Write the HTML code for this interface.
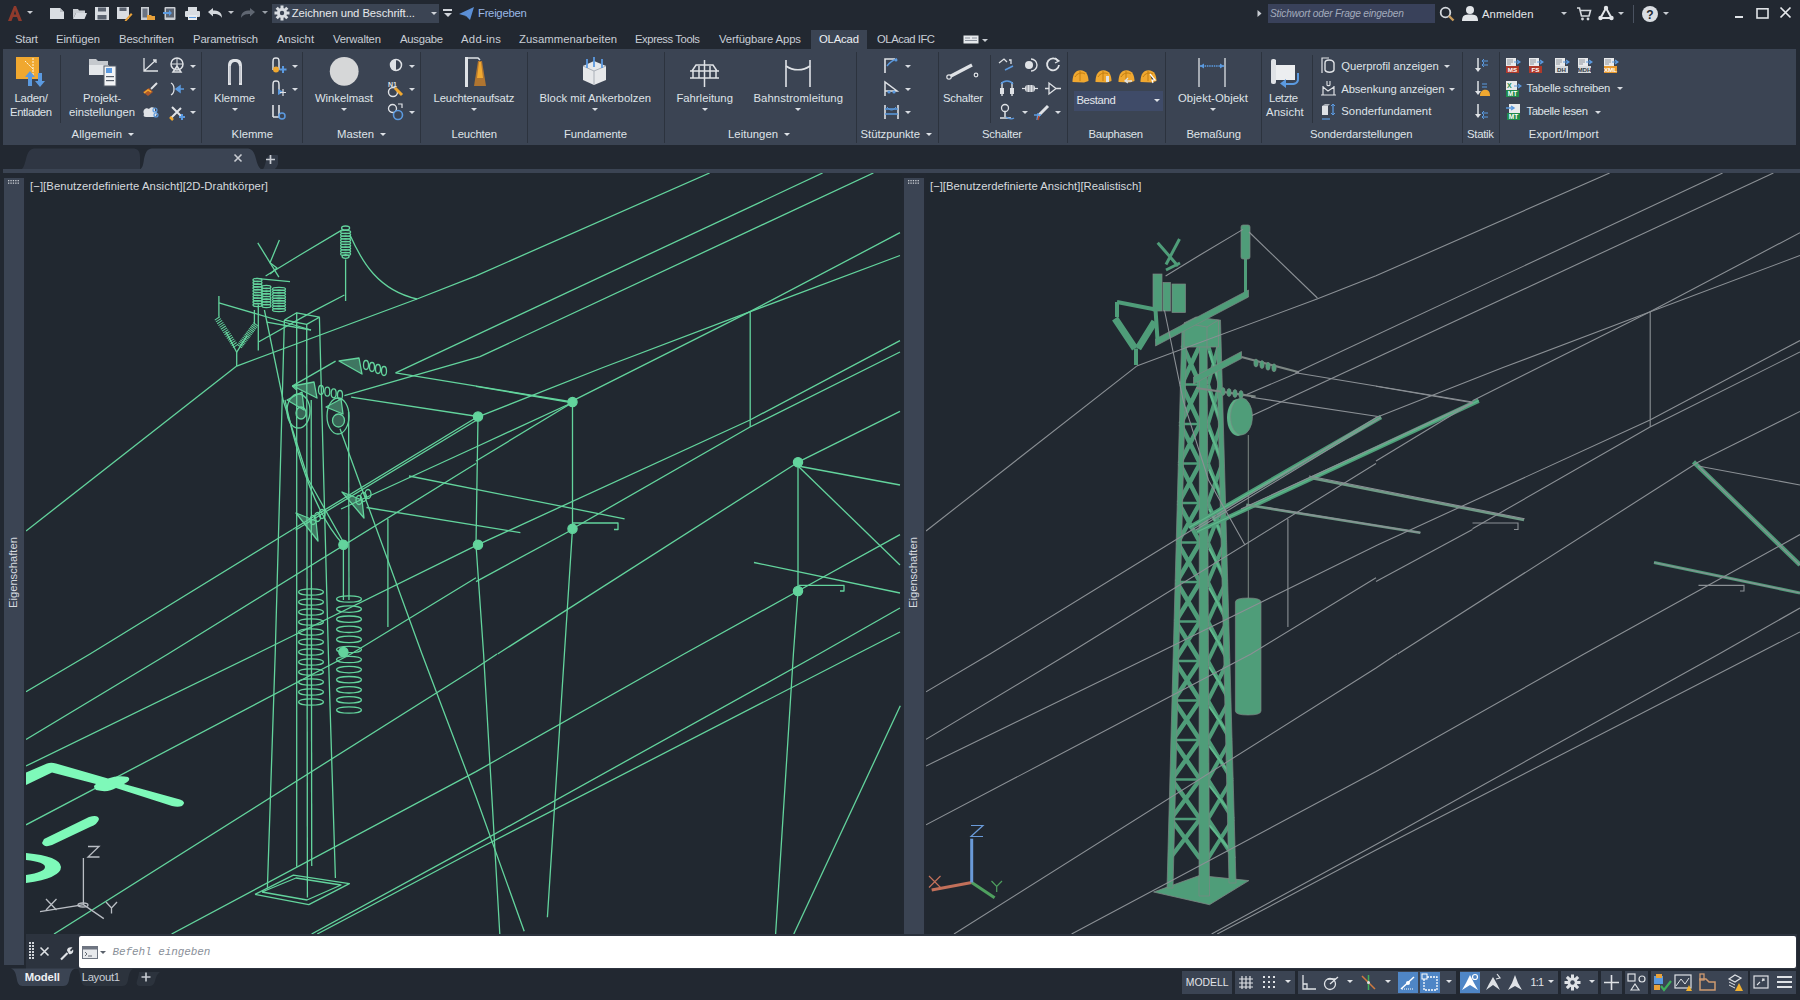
<!DOCTYPE html>
<html><head><meta charset="utf-8">
<style>
*{box-sizing:border-box}
html,body{margin:0;padding:0}
body{width:1800px;height:1000px;position:relative;overflow:hidden;background:#222831;font-family:"Liberation Sans",sans-serif;color:#e3e6ea;font-size:12px}
.a{position:absolute;display:block}
.t{position:absolute;white-space:nowrap}
</style></head><body>
<svg class="a" style="left:7px;top:5px;" width="16" height="17" viewBox="0 0 16 17"><path d="M1 16 L7 1 L9 1 L15 16 L11.5 16 L10 12 L6 12 L4.5 16 Z M6.8 9.5 L9.2 9.5 L8 5.5 Z" fill="#8f3a2c"/></svg>
<div class="a" style="left:26.5px;top:11.0px;width:0;height:0;border-left:3.0px solid transparent;border-right:3.0px solid transparent;border-top:3.0px solid #c8ccd2"></div>
<svg class="a" style="left:49px;top:7px;" width="17" height="13" viewBox="0 0 17 13"><path d="M1 1 H11 L15 5 V12 H1 Z" fill="#d9dde2"/><path d="M11 1 V5 H15" fill="#b8bcc2"/></svg>
<svg class="a" style="left:72px;top:7px;" width="16" height="13" viewBox="0 0 16 13"><path d="M1 2 H6 L7 3.5 H13 V6 H4 L1 12 Z" fill="#c9cdd2"/><path d="M4 6 H15 L12.5 12 H1 Z" fill="#d9dde2"/></svg>
<svg class="a" style="left:94px;top:6px;" width="16" height="15" viewBox="0 0 16 15"><rect x="1" y="1" width="14" height="13" fill="#d9dde2"/><rect x="4" y="1.5" width="8" height="4" fill="#5b6370"/><rect x="3.5" y="9" width="9" height="4.5" fill="#5b6370"/></svg>
<svg class="a" style="left:116px;top:6px;" width="17" height="15" viewBox="0 0 17 15"><rect x="1" y="1" width="12" height="12" fill="#d9dde2"/><rect x="3.5" y="1.5" width="7" height="3.5" fill="#5b6370"/><path d="M9 14 L15 7 L16.5 8.5 L10.5 15 L8.5 15.5 Z" fill="#e8a13a"/></svg>
<svg class="a" style="left:140px;top:6px;" width="16" height="15" viewBox="0 0 16 15"><rect x="1" y="1" width="8" height="13" fill="#c9cdd2"/><rect x="2.5" y="2.5" width="5" height="9" fill="#6a7280"/><path d="M7 9 H11 L12 10 H15 V14 H7 Z" fill="#e8a13a"/></svg>
<svg class="a" style="left:163px;top:6px;" width="14" height="15" viewBox="0 0 14 15"><rect x="1.5" y="1" width="11" height="13" rx="1" fill="#c9cdd2"/><rect x="3" y="2.5" width="8" height="9" fill="#5b6370"/><path d="M0 6 H6 V4 L9 7 L6 10 V8 H0 Z" fill="#5b9ae0"/></svg>
<svg class="a" style="left:184px;top:6px;" width="17" height="15" viewBox="0 0 17 15"><rect x="4" y="1" width="9" height="4" fill="#d9dde2"/><rect x="1" y="5" width="15" height="6" rx="1" fill="#d9dde2"/><rect x="4" y="9" width="9" height="5" fill="#e8ebee"/><rect x="5" y="11" width="7" height="1" fill="#5b9ae0"/></svg>
<svg class="a" style="left:207px;top:7px;" width="16" height="12" viewBox="0 0 16 12"><path d="M1 5 L6 1 V3.5 C11 3.5 15 5 15 11 C13 7.5 10 7 6 7 V9.5 Z" fill="#d4d8dd"/></svg>
<div class="a" style="left:228.0px;top:11.0px;width:0;height:0;border-left:3.0px solid transparent;border-right:3.0px solid transparent;border-top:3.0px solid #c0c4ca"></div>
<svg class="a" style="left:240px;top:7px;" width="16" height="12" viewBox="0 0 16 12"><path d="M15 5 L10 1 V3.5 C5 3.5 1 5 1 11 C3 7.5 6 7 10 7 V9.5 Z" fill="#5f6671"/></svg>
<div class="a" style="left:262.0px;top:11.0px;width:0;height:0;border-left:3.0px solid transparent;border-right:3.0px solid transparent;border-top:3.0px solid #9aa0a8"></div>
<div class="a" style="left:272px;top:4px;width:167px;height:19px;background:#3b4453;"></div>
<svg class="a" style="left:274px;top:5px;" width="16" height="16" viewBox="0 0 16 16"><g fill="#d9dde2"><circle cx="8" cy="8" r="5"/><rect x="6.5" y="0.5" width="3" height="15"/><rect x="0.5" y="6.5" width="15" height="3"/><rect x="6.5" y="0.5" width="3" height="15" transform="rotate(45 8 8)"/><rect x="6.5" y="0.5" width="3" height="15" transform="rotate(-45 8 8)"/></g><circle cx="8" cy="8" r="2.2" fill="#3b4453"/></svg>
<span class="t" style="left:291.7px;top:7.73px;font-size:11.30px;line-height:11.30px;color:#e6e8eb;font-family:'Liberation Sans',sans-serif;letter-spacing:-0.070px;">Zeichnen und Beschrift...</span>
<div class="a" style="left:431.0px;top:11.8px;width:0;height:0;border-left:3.5px solid transparent;border-right:3.5px solid transparent;border-top:3.5px solid #d0d4da"></div>
<div class="a" style="left:443px;top:9px;width:9px;height:1.5px;background:#d0d4da;"></div>
<div class="a" style="left:443.5px;top:12.5px;width:0;height:0;border-left:4.0px solid transparent;border-right:4.0px solid transparent;border-top:4.0px solid #d0d4da"></div>
<svg class="a" style="left:458px;top:6px;" width="17" height="15" viewBox="0 0 17 15"><path d="M1 8 L16 1 L12 14 L8 10 Z" fill="#5b8fd6"/><path d="M8 10 L16 1 L6 12 Z" fill="#8ab0e6"/></svg>
<span class="t" style="left:478.0px;top:8.43px;font-size:11.30px;line-height:11.30px;color:#9ab8e6;font-family:'Liberation Sans',sans-serif;letter-spacing:-0.272px;">Freigeben</span>
<svg class="a" style="left:1256px;top:9px;" width="7" height="9" viewBox="0 0 7 9"><path d="M1.5 1 L5.5 4.5 L1.5 8 Z" fill="#c8ccd2"/></svg>
<div class="a" style="left:1268px;top:4px;width:167px;height:19px;background:#39415a;"></div>
<span class="t" style="left:1270.0px;top:8.87px;font-size:10.20px;line-height:10.20px;color:#a3abbc;font-family:'Liberation Sans',sans-serif;letter-spacing:-0.195px;font-style:italic;">Stichwort oder Frage eingeben</span>
<svg class="a" style="left:1439px;top:6px;" width="16" height="16" viewBox="0 0 16 16"><circle cx="6.5" cy="6.5" r="4.8" fill="none" stroke="#d3d7dc" stroke-width="1.8"/><path d="M10 10 L14.5 14.5" stroke="#c79a5a" stroke-width="2.4"/></svg>
<svg class="a" style="left:1461px;top:5px;" width="18" height="17" viewBox="0 0 18 17"><circle cx="9" cy="5" r="4" fill="#e2e5e9"/><path d="M1 16 C1 10 4 9.5 9 9.5 C14 9.5 17 10 17 16 Z" fill="#e2e5e9"/></svg>
<span class="t" style="left:1482.0px;top:8.73px;font-size:11.30px;line-height:11.30px;color:#e4e7ea;font-family:'Liberation Sans',sans-serif;letter-spacing:0.089px;">Anmelden</span>
<div class="a" style="left:1561.0px;top:12.0px;width:0;height:0;border-left:3.0px solid transparent;border-right:3.0px solid transparent;border-top:3.0px solid #c8ccd2"></div>
<svg class="a" style="left:1576px;top:6px;" width="16" height="15" viewBox="0 0 16 15"><path d="M1 2 H3.5 L5.5 10 H13 L14.5 4.5 H4.5" fill="none" stroke="#d3d7dc" stroke-width="1.6"/><circle cx="6.5" cy="13" r="1.4" fill="#d3d7dc"/><circle cx="12" cy="13" r="1.4" fill="#d3d7dc"/></svg>
<svg class="a" style="left:1598px;top:5px;" width="16" height="16" viewBox="0 0 16 16"><path d="M8 3 L2.5 13 M8 3 L13.5 13 M2.5 13 H13.5" stroke="#e2e5e9" stroke-width="2"/><circle cx="8" cy="3" r="2.2" fill="#e2e5e9"/><circle cx="2.5" cy="13" r="2.2" fill="#e2e5e9"/><circle cx="13.5" cy="13" r="2.2" fill="#e2e5e9"/></svg>
<div class="a" style="left:1618.0px;top:12.0px;width:0;height:0;border-left:3.0px solid transparent;border-right:3.0px solid transparent;border-top:3.0px solid #c8ccd2"></div>
<div class="a" style="left:1633px;top:5px;width:1px;height:18px;background:#4a5260;"></div>
<svg class="a" style="left:1641px;top:5px;" width="18" height="18" viewBox="0 0 18 18"><circle cx="9" cy="9" r="8" fill="#d9dde2"/><text x="9" y="13.5" font-size="12" font-weight="bold" text-anchor="middle" fill="#222831" font-family="Liberation Sans">?</text></svg>
<div class="a" style="left:1663.0px;top:12.0px;width:0;height:0;border-left:3.0px solid transparent;border-right:3.0px solid transparent;border-top:3.0px solid #c8ccd2"></div>
<div class="a" style="left:1735px;top:16px;width:8px;height:2px;background:#e0e3e7;"></div>
<svg class="a" style="left:1756px;top:7px;" width="13" height="12" viewBox="0 0 13 12"><rect x="1" y="1.8" width="11" height="9.2" fill="none" stroke="#e0e3e7" stroke-width="1.6"/></svg>
<svg class="a" style="left:1779px;top:6px;" width="13" height="13" viewBox="0 0 13 13"><path d="M1.5 1.5 L11.5 11.5 M11.5 1.5 L1.5 11.5" stroke="#e6e9ec" stroke-width="1.7"/></svg>
<div class="a" style="left:811px;top:30px;width:56px;height:19px;background:#3b4453;"></div>
<span class="t" style="left:15.0px;top:33.73px;font-size:11.30px;line-height:11.30px;color:#c9ced6;font-family:'Liberation Sans',sans-serif;letter-spacing:-0.216px;">Start</span>
<span class="t" style="left:56.0px;top:33.73px;font-size:11.30px;line-height:11.30px;color:#c9ced6;font-family:'Liberation Sans',sans-serif;letter-spacing:-0.087px;">Einfügen</span>
<span class="t" style="left:119.0px;top:33.73px;font-size:11.30px;line-height:11.30px;color:#c9ced6;font-family:'Liberation Sans',sans-serif;letter-spacing:-0.152px;">Beschriften</span>
<span class="t" style="left:193.0px;top:33.73px;font-size:11.30px;line-height:11.30px;color:#c9ced6;font-family:'Liberation Sans',sans-serif;letter-spacing:-0.142px;">Parametrisch</span>
<span class="t" style="left:277.0px;top:33.73px;font-size:11.30px;line-height:11.30px;color:#c9ced6;font-family:'Liberation Sans',sans-serif;">Ansicht</span>
<span class="t" style="left:333.0px;top:33.73px;font-size:11.30px;line-height:11.30px;color:#c9ced6;font-family:'Liberation Sans',sans-serif;letter-spacing:-0.203px;">Verwalten</span>
<span class="t" style="left:400.0px;top:33.73px;font-size:11.30px;line-height:11.30px;color:#c9ced6;font-family:'Liberation Sans',sans-serif;letter-spacing:-0.268px;">Ausgabe</span>
<span class="t" style="left:461.0px;top:33.73px;font-size:11.30px;line-height:11.30px;color:#c9ced6;font-family:'Liberation Sans',sans-serif;letter-spacing:0.281px;">Add-ins</span>
<span class="t" style="left:519.0px;top:33.73px;font-size:11.30px;line-height:11.30px;color:#c9ced6;font-family:'Liberation Sans',sans-serif;letter-spacing:0.044px;">Zusammenarbeiten</span>
<span class="t" style="left:635.0px;top:33.73px;font-size:11.30px;line-height:11.30px;color:#c9ced6;font-family:'Liberation Sans',sans-serif;letter-spacing:-0.428px;">Express Tools</span>
<span class="t" style="left:719.0px;top:33.73px;font-size:11.30px;line-height:11.30px;color:#c9ced6;font-family:'Liberation Sans',sans-serif;letter-spacing:-0.111px;">Verfügbare Apps</span>
<span class="t" style="left:819.0px;top:33.73px;font-size:11.30px;line-height:11.30px;color:#eef0f3;font-family:'Liberation Sans',sans-serif;letter-spacing:-0.166px;">OLAcad</span>
<span class="t" style="left:877.0px;top:33.73px;font-size:11.30px;line-height:11.30px;color:#c9ced6;font-family:'Liberation Sans',sans-serif;letter-spacing:-0.463px;">OLAcad IFC</span>
<svg class="a" style="left:963px;top:35px;" width="16" height="9" viewBox="0 0 16 9"><rect x="0.5" y="0.5" width="15" height="8" fill="#e6e9ec"/><rect x="2" y="2.5" width="5" height="1" fill="#8a919c"/><rect x="9" y="2.5" width="5" height="1" fill="#8a919c"/><rect x="2" y="5" width="12" height="1" fill="#8a919c"/></svg>
<div class="a" style="left:982.0px;top:38.5px;width:0;height:0;border-left:3.0px solid transparent;border-right:3.0px solid transparent;border-top:3.0px solid #c8ccd2"></div>
<div class="a" style="left:3px;top:49px;width:1793px;height:96px;background:#3b4453;"></div>
<div class="a" style="left:201px;top:52px;width:1px;height:91px;background:#2c333e;"></div>
<div class="a" style="left:302px;top:52px;width:1px;height:91px;background:#2c333e;"></div>
<div class="a" style="left:420px;top:52px;width:1px;height:91px;background:#2c333e;"></div>
<div class="a" style="left:527px;top:52px;width:1px;height:91px;background:#2c333e;"></div>
<div class="a" style="left:663.5px;top:52px;width:1px;height:91px;background:#2c333e;"></div>
<div class="a" style="left:855.5px;top:52px;width:1px;height:91px;background:#2c333e;"></div>
<div class="a" style="left:938px;top:52px;width:1px;height:91px;background:#2c333e;"></div>
<div class="a" style="left:1066.5px;top:52px;width:1px;height:91px;background:#2c333e;"></div>
<div class="a" style="left:1165px;top:52px;width:1px;height:91px;background:#2c333e;"></div>
<div class="a" style="left:1260.5px;top:52px;width:1px;height:91px;background:#2c333e;"></div>
<div class="a" style="left:1461.5px;top:52px;width:1px;height:91px;background:#2c333e;"></div>
<div class="a" style="left:1498.5px;top:52px;width:1px;height:91px;background:#2c333e;"></div>
<div class="a" style="left:60px;top:55px;width:1px;height:68px;background:#2c333e;"></div>
<div class="a" style="left:990px;top:55px;width:1px;height:68px;background:#2c333e;"></div>
<div class="a" style="left:1311.5px;top:55px;width:1px;height:68px;background:#2c333e;"></div>
<span class="t" style="left:71.5px;top:129.23px;font-size:11.30px;line-height:11.30px;color:#dfe3e8;font-family:'Liberation Sans',sans-serif;letter-spacing:0.110px;">Allgemein</span>
<div class="a" style="left:127.5px;top:133.1px;width:0;height:0;border-left:3.5px solid transparent;border-right:3.5px solid transparent;border-top:3.5px solid #dfe3e8"></div>
<span class="t" style="left:231.6px;top:129.23px;font-size:11.30px;line-height:11.30px;color:#dfe3e8;font-family:'Liberation Sans',sans-serif;">Klemme</span>
<span class="t" style="left:337.0px;top:129.23px;font-size:11.30px;line-height:11.30px;color:#dfe3e8;font-family:'Liberation Sans',sans-serif;letter-spacing:-0.011px;">Masten</span>
<div class="a" style="left:379.5px;top:133.1px;width:0;height:0;border-left:3.5px solid transparent;border-right:3.5px solid transparent;border-top:3.5px solid #dfe3e8"></div>
<span class="t" style="left:451.5px;top:129.23px;font-size:11.30px;line-height:11.30px;color:#dfe3e8;font-family:'Liberation Sans',sans-serif;letter-spacing:-0.142px;">Leuchten</span>
<span class="t" style="left:564.0px;top:129.23px;font-size:11.30px;line-height:11.30px;color:#dfe3e8;font-family:'Liberation Sans',sans-serif;letter-spacing:-0.049px;">Fundamente</span>
<span class="t" style="left:728.0px;top:129.23px;font-size:11.30px;line-height:11.30px;color:#dfe3e8;font-family:'Liberation Sans',sans-serif;letter-spacing:0.045px;">Leitungen</span>
<div class="a" style="left:783.5px;top:133.1px;width:0;height:0;border-left:3.5px solid transparent;border-right:3.5px solid transparent;border-top:3.5px solid #dfe3e8"></div>
<span class="t" style="left:860.5px;top:129.23px;font-size:11.30px;line-height:11.30px;color:#dfe3e8;font-family:'Liberation Sans',sans-serif;letter-spacing:-0.017px;">Stützpunkte</span>
<div class="a" style="left:925.5px;top:133.1px;width:0;height:0;border-left:3.5px solid transparent;border-right:3.5px solid transparent;border-top:3.5px solid #dfe3e8"></div>
<span class="t" style="left:982.0px;top:129.23px;font-size:11.30px;line-height:11.30px;color:#dfe3e8;font-family:'Liberation Sans',sans-serif;letter-spacing:-0.207px;">Schalter</span>
<span class="t" style="left:1088.5px;top:129.23px;font-size:11.30px;line-height:11.30px;color:#dfe3e8;font-family:'Liberation Sans',sans-serif;letter-spacing:-0.334px;">Bauphasen</span>
<span class="t" style="left:1186.4px;top:129.23px;font-size:11.30px;line-height:11.30px;color:#dfe3e8;font-family:'Liberation Sans',sans-serif;letter-spacing:-0.096px;">Bemaßung</span>
<span class="t" style="left:1310.0px;top:129.23px;font-size:11.30px;line-height:11.30px;color:#dfe3e8;font-family:'Liberation Sans',sans-serif;letter-spacing:-0.093px;">Sonderdarstellungen</span>
<span class="t" style="left:1467.0px;top:129.23px;font-size:11.30px;line-height:11.30px;color:#dfe3e8;font-family:'Liberation Sans',sans-serif;letter-spacing:-0.252px;">Statik</span>
<span class="t" style="left:1528.7px;top:129.23px;font-size:11.30px;line-height:11.30px;color:#dfe3e8;font-family:'Liberation Sans',sans-serif;letter-spacing:0.182px;">Export/Import</span>
<span class="t" style="left:14.5px;top:92.63px;font-size:11.30px;line-height:11.30px;color:#dfe3e8;font-family:'Liberation Sans',sans-serif;letter-spacing:-0.212px;">Laden/</span>
<span class="t" style="left:10.0px;top:106.93px;font-size:11.30px;line-height:11.30px;color:#dfe3e8;font-family:'Liberation Sans',sans-serif;letter-spacing:-0.372px;">Entladen</span>
<span class="t" style="left:83.0px;top:92.63px;font-size:11.30px;line-height:11.30px;color:#dfe3e8;font-family:'Liberation Sans',sans-serif;letter-spacing:-0.133px;">Projekt-</span>
<span class="t" style="left:69.0px;top:106.93px;font-size:11.30px;line-height:11.30px;color:#dfe3e8;font-family:'Liberation Sans',sans-serif;letter-spacing:-0.049px;">einstellungen</span>
<span class="t" style="left:214.0px;top:92.63px;font-size:11.30px;line-height:11.30px;color:#dfe3e8;font-family:'Liberation Sans',sans-serif;letter-spacing:-0.088px;">Klemme</span>
<div class="a" style="left:232.0px;top:108.3px;width:0;height:0;border-left:3.0px solid transparent;border-right:3.0px solid transparent;border-top:3.0px solid #d8dce2"></div>
<span class="t" style="left:315.0px;top:92.63px;font-size:11.30px;line-height:11.30px;color:#dfe3e8;font-family:'Liberation Sans',sans-serif;letter-spacing:-0.043px;">Winkelmast</span>
<div class="a" style="left:340.6px;top:108.3px;width:0;height:0;border-left:3.0px solid transparent;border-right:3.0px solid transparent;border-top:3.0px solid #d8dce2"></div>
<span class="t" style="left:433.6px;top:92.63px;font-size:11.30px;line-height:11.30px;color:#dfe3e8;font-family:'Liberation Sans',sans-serif;letter-spacing:-0.152px;">Leuchtenaufsatz</span>
<div class="a" style="left:470.5px;top:108.3px;width:0;height:0;border-left:3.0px solid transparent;border-right:3.0px solid transparent;border-top:3.0px solid #d8dce2"></div>
<span class="t" style="left:539.5px;top:92.63px;font-size:11.30px;line-height:11.30px;color:#dfe3e8;font-family:'Liberation Sans',sans-serif;letter-spacing:0.017px;">Block mit Ankerbolzen</span>
<div class="a" style="left:592.0px;top:108.3px;width:0;height:0;border-left:3.0px solid transparent;border-right:3.0px solid transparent;border-top:3.0px solid #d8dce2"></div>
<span class="t" style="left:676.4px;top:92.63px;font-size:11.30px;line-height:11.30px;color:#dfe3e8;font-family:'Liberation Sans',sans-serif;">Fahrleitung</span>
<div class="a" style="left:702.0px;top:108.3px;width:0;height:0;border-left:3.0px solid transparent;border-right:3.0px solid transparent;border-top:3.0px solid #d8dce2"></div>
<span class="t" style="left:753.4px;top:92.63px;font-size:11.30px;line-height:11.30px;color:#dfe3e8;font-family:'Liberation Sans',sans-serif;letter-spacing:0.111px;">Bahnstromleitung</span>
<div class="a" style="left:795.0px;top:108.3px;width:0;height:0;border-left:3.0px solid transparent;border-right:3.0px solid transparent;border-top:3.0px solid #d8dce2"></div>
<span class="t" style="left:943.0px;top:92.63px;font-size:11.30px;line-height:11.30px;color:#dfe3e8;font-family:'Liberation Sans',sans-serif;letter-spacing:-0.207px;">Schalter</span>
<span class="t" style="left:1178.0px;top:92.63px;font-size:11.30px;line-height:11.30px;color:#dfe3e8;font-family:'Liberation Sans',sans-serif;letter-spacing:0.077px;">Objekt-Objekt</span>
<div class="a" style="left:1209.6px;top:108.3px;width:0;height:0;border-left:3.0px solid transparent;border-right:3.0px solid transparent;border-top:3.0px solid #d8dce2"></div>
<span class="t" style="left:1269.0px;top:92.63px;font-size:11.30px;line-height:11.30px;color:#dfe3e8;font-family:'Liberation Sans',sans-serif;letter-spacing:-0.356px;">Letzte</span>
<span class="t" style="left:1266.0px;top:106.93px;font-size:11.30px;line-height:11.30px;color:#dfe3e8;font-family:'Liberation Sans',sans-serif;letter-spacing:0.107px;">Ansicht</span>
<span class="t" style="left:1341.3px;top:61.03px;font-size:11.30px;line-height:11.30px;color:#dfe3e8;font-family:'Liberation Sans',sans-serif;letter-spacing:-0.062px;">Querprofil anzeigen</span>
<div class="a" style="left:1443.6px;top:65.0px;width:0;height:0;border-left:3.0px solid transparent;border-right:3.0px solid transparent;border-top:3.0px solid #d8dce2"></div>
<span class="t" style="left:1341.3px;top:83.93px;font-size:11.30px;line-height:11.30px;color:#dfe3e8;font-family:'Liberation Sans',sans-serif;letter-spacing:-0.138px;">Absenkung anzeigen</span>
<div class="a" style="left:1449.0px;top:87.5px;width:0;height:0;border-left:3.0px solid transparent;border-right:3.0px solid transparent;border-top:3.0px solid #d8dce2"></div>
<span class="t" style="left:1341.3px;top:106.23px;font-size:11.30px;line-height:11.30px;color:#dfe3e8;font-family:'Liberation Sans',sans-serif;letter-spacing:0.012px;">Sonderfundament</span>
<span class="t" style="left:1526.4px;top:83.03px;font-size:11.30px;line-height:11.30px;color:#dfe3e8;font-family:'Liberation Sans',sans-serif;letter-spacing:-0.246px;">Tabelle schreiben</span>
<div class="a" style="left:1617.0px;top:87.0px;width:0;height:0;border-left:3.0px solid transparent;border-right:3.0px solid transparent;border-top:3.0px solid #d8dce2"></div>
<span class="t" style="left:1526.4px;top:106.43px;font-size:11.30px;line-height:11.30px;color:#dfe3e8;font-family:'Liberation Sans',sans-serif;letter-spacing:-0.363px;">Tabelle lesen</span>
<div class="a" style="left:1594.8px;top:110.5px;width:0;height:0;border-left:3.0px solid transparent;border-right:3.0px solid transparent;border-top:3.0px solid #d8dce2"></div>
<div class="a" style="left:1073.5px;top:90.5px;width:89px;height:20px;background:#3f4b68;"></div>
<span class="t" style="left:1076.4px;top:95.43px;font-size:11.30px;line-height:11.30px;color:#e4e7ec;font-family:'Liberation Sans',sans-serif;letter-spacing:-0.344px;">Bestand</span>
<div class="a" style="left:1153.5px;top:98.8px;width:0;height:0;border-left:3.5px solid transparent;border-right:3.5px solid transparent;border-top:3.5px solid #dfe3e8"></div>
<div class="a" style="left:190.0px;top:64.5px;width:0;height:0;border-left:3.0px solid transparent;border-right:3.0px solid transparent;border-top:3.0px solid #d8dce2"></div>
<div class="a" style="left:190.0px;top:87.5px;width:0;height:0;border-left:3.0px solid transparent;border-right:3.0px solid transparent;border-top:3.0px solid #d8dce2"></div>
<div class="a" style="left:190.0px;top:110.5px;width:0;height:0;border-left:3.0px solid transparent;border-right:3.0px solid transparent;border-top:3.0px solid #d8dce2"></div>
<div class="a" style="left:291.5px;top:64.5px;width:0;height:0;border-left:3.0px solid transparent;border-right:3.0px solid transparent;border-top:3.0px solid #d8dce2"></div>
<div class="a" style="left:291.5px;top:87.5px;width:0;height:0;border-left:3.0px solid transparent;border-right:3.0px solid transparent;border-top:3.0px solid #d8dce2"></div>
<div class="a" style="left:409.0px;top:64.5px;width:0;height:0;border-left:3.0px solid transparent;border-right:3.0px solid transparent;border-top:3.0px solid #d8dce2"></div>
<div class="a" style="left:409.0px;top:87.5px;width:0;height:0;border-left:3.0px solid transparent;border-right:3.0px solid transparent;border-top:3.0px solid #d8dce2"></div>
<div class="a" style="left:409.0px;top:110.5px;width:0;height:0;border-left:3.0px solid transparent;border-right:3.0px solid transparent;border-top:3.0px solid #d8dce2"></div>
<div class="a" style="left:904.8px;top:64.5px;width:0;height:0;border-left:3.0px solid transparent;border-right:3.0px solid transparent;border-top:3.0px solid #d8dce2"></div>
<div class="a" style="left:904.8px;top:87.5px;width:0;height:0;border-left:3.0px solid transparent;border-right:3.0px solid transparent;border-top:3.0px solid #d8dce2"></div>
<div class="a" style="left:904.8px;top:110.5px;width:0;height:0;border-left:3.0px solid transparent;border-right:3.0px solid transparent;border-top:3.0px solid #d8dce2"></div>
<div class="a" style="left:1021.5px;top:110.5px;width:0;height:0;border-left:3.0px solid transparent;border-right:3.0px solid transparent;border-top:3.0px solid #d8dce2"></div>
<div class="a" style="left:1055.0px;top:110.5px;width:0;height:0;border-left:3.0px solid transparent;border-right:3.0px solid transparent;border-top:3.0px solid #d8dce2"></div>
<svg class="a" style="left:14px;top:55px;" width="32" height="33" viewBox="0 0 32 33"><rect x="2" y="2" width="23" height="22" fill="#f0a830"/><path d="M11 6 L20 15 M19 3 V20" stroke="#fff6dd" stroke-width="1" stroke-dasharray="2 1"/><path d="M14 31 V22 H11 L16 16 L21 22 H18 V31 Z" fill="#5b9ae0"/><path d="M24 18 V26 H21 L26 32 L31 26 H28 V18 Z" fill="#5b9ae0"/></svg>
<svg class="a" style="left:88px;top:57px;" width="29" height="30" viewBox="0 0 29 30"><path d="M1 2 H8 L10 4 H20 V18 H1 Z" fill="#c5c9ce"/><path d="M1 8 H21 L18 18 H1 Z" fill="#e4e7ea"/><rect x="16" y="9" width="12" height="20" fill="#f2f4f6" stroke="#555d69" stroke-width="1"/><rect x="18" y="11" width="6" height="5" fill="#5b9ae0"/><rect x="18" y="19" width="8" height="1.2" fill="#555d69"/><rect x="18" y="23" width="8" height="1.2" fill="#555d69"/></svg>
<svg class="a" style="left:142px;top:57px;" width="17" height="16" viewBox="0 0 17 16"><path d="M2 1 V14 H16 M2 14 L14 3 M11 3 H14 V6" fill="none" stroke="#dfe2e6" stroke-width="1.3"/></svg>
<svg class="a" style="left:142px;top:81px;" width="17" height="16" viewBox="0 0 17 16"><path d="M1 11 L7 7 L11 11 L6 15 Z" fill="#b05a2a"/><path d="M2 12 L6 9 L9 11" stroke="#f0a830" stroke-width="1.5" fill="none"/><path d="M9 8 L15 2" stroke="#dfe2e6" stroke-width="2"/></svg>
<svg class="a" style="left:142px;top:104px;" width="17" height="16" viewBox="0 0 17 16"><path d="M2 10 C0 6 4 3 7 5 C9 2 14 3 13 7 C16 8 15 13 12 13 H4 C2 13 1 12 2 10 Z" fill="#dfe2e6"/><circle cx="13" cy="6" r="2" fill="none" stroke="#5b9ae0" stroke-width="1.2"/><circle cx="14" cy="11" r="2" fill="none" stroke="#5b9ae0" stroke-width="1.2"/></svg>
<svg class="a" style="left:169px;top:57px;" width="16" height="16" viewBox="0 0 16 16"><circle cx="8" cy="7" r="6" fill="none" stroke="#dfe2e6" stroke-width="1.5"/><path d="M2 7 H14 M8 1 V13" stroke="#dfe2e6" stroke-width="1"/><path d="M4 15 L8 9 L12 15 Z" fill="none" stroke="#dfe2e6" stroke-width="1.5"/></svg>
<svg class="a" style="left:169px;top:81px;" width="16" height="16" viewBox="0 0 16 16"><path d="M2 2 C6 4 6 12 2 14" fill="none" stroke="#dfe2e6" stroke-width="1.3"/><path d="M15 8 H8 M11 5 L7 8 L11 11 Z" stroke="#5b9ae0" fill="#5b9ae0" stroke-width="1.5"/></svg>
<svg class="a" style="left:169px;top:104px;" width="17" height="17" viewBox="0 0 17 17"><path d="M2 14 L12 4 M3 3 L13 13" stroke="#dfe2e6" stroke-width="2"/><path d="M1 13 L4 16" stroke="#f0a830" stroke-width="2.5"/><path d="M13 10 V16 M10 13 H16" stroke="#5b9ae0" stroke-width="2"/></svg>
<svg class="a" style="left:225px;top:58px;" width="20" height="29" viewBox="0 0 20 29"><path d="M3 27 V8 C3 2 6 1 10 1 C14 1 17 2 17 8 V27 H14 V9 C14 5 12 4 10 4 C8 4 6 5 6 9 V27 Z" fill="#dfe2e6"/><path d="M5 8 V25 M15 8 V25" stroke="#9aa0a8" stroke-width="0.8"/></svg>
<svg class="a" style="left:270px;top:57px;" width="17" height="17" viewBox="0 0 17 17"><path d="M3 13 V5 C3 1 4 1 6 1 C8 1 9 1 9 5 V13" fill="none" stroke="#dfe2e6" stroke-width="1.5"/><circle cx="6" cy="12.5" r="3" fill="#f0a830"/><path d="M13 9 V16 M9.5 12.5 H16.5" stroke="#5b9ae0" stroke-width="2"/></svg>
<svg class="a" style="left:270px;top:80px;" width="17" height="17" viewBox="0 0 17 17"><path d="M3 14 V5 C3 1 4 1 6 1 C8 1 9 1 9 5 V14" fill="none" stroke="#dfe2e6" stroke-width="1.5"/><path d="M8 9 L14 12 L8 15 Z" fill="#5b9ae0"/><path d="M13 9 V16 M10 12.5 H16" stroke="#dfe2e6" stroke-width="1.2"/></svg>
<svg class="a" style="left:270px;top:103px;" width="17" height="17" viewBox="0 0 17 17"><path d="M3 14 V2 M9 14 V2 M3 14 H9" fill="none" stroke="#dfe2e6" stroke-width="1.6"/><circle cx="12" cy="13" r="3" fill="none" stroke="#5b9ae0" stroke-width="1.5"/></svg>
<svg class="a" style="left:329px;top:56px;" width="31" height="31" viewBox="0 0 31 31"><circle cx="15.2" cy="15.3" r="14.4" fill="#d6d7d8"/></svg>
<svg class="a" style="left:388px;top:57px;" width="16" height="16" viewBox="0 0 16 16"><circle cx="8" cy="8" r="5.5" fill="none" stroke="#dfe2e6" stroke-width="1.5"/><path d="M8 2.5 A5.5 5.5 0 0 0 8 13.5 Z" fill="#dfe2e6"/></svg>
<svg class="a" style="left:387px;top:80px;" width="18" height="18" viewBox="0 0 18 18"><text x="1" y="7" font-size="7" font-weight="bold" fill="#dfe2e6" font-family="Liberation Sans">N1</text><circle cx="6" cy="12" r="4.5" fill="none" stroke="#dfe2e6" stroke-width="1.4"/><path d="M8 8 L15 15" stroke="#f0a830" stroke-width="3"/></svg>
<svg class="a" style="left:387px;top:103px;" width="18" height="18" viewBox="0 0 18 18"><circle cx="5.5" cy="5.5" r="4" fill="none" stroke="#dfe2e6" stroke-width="1.3"/><circle cx="11" cy="12" r="4.5" fill="none" stroke="#5b9ae0" stroke-width="1.6"/><path d="M11 1 H15 V5" stroke="#dfe2e6" stroke-width="1.2" fill="none"/></svg>
<svg class="a" style="left:464px;top:56px;" width="24" height="32" viewBox="0 0 24 32"><rect x="1" y="1" width="3" height="30" fill="#dfe2e6"/><path d="M2 2 H14 L16 4" stroke="#dfe2e6" stroke-width="1.5" fill="none"/><path d="M14 5 L18 5 L22 30 H10 Z" fill="#b07530"/><path d="M15 6 L17 6 L19 22 H13 Z" fill="#f0a830"/></svg>
<svg class="a" style="left:581px;top:56px;" width="28" height="31" viewBox="0 0 28 31"><path d="M2 10 L13 5 L25 10 V24 L13 29 L2 24 Z" fill="#e6e8ea"/><path d="M2 10 L13 15 L25 10 M13 15 V29" stroke="#aab0b8" stroke-width="1" fill="none"/><path d="M6 3 V12 M13 1 V11 M21 3 V12" stroke="#5b9ae0" stroke-width="1.8"/></svg>
<svg class="a" style="left:688px;top:59px;" width="34" height="29" viewBox="0 0 34 29"><g stroke="#dfe2e6" stroke-width="1.5" fill="none"><path d="M16.5 1 V28"/><path d="M2 12 H31 M4 12 L8 6 H25 L29 12 M5 12 V19 M28 12 V19 M2 19 H31 M11 7 V19 M22 7 V19"/></g></svg>
<svg class="a" style="left:783px;top:59px;" width="30" height="29" viewBox="0 0 30 29"><g stroke="#dfe2e6" stroke-width="1.6" fill="none"><path d="M3 1 V28 M27 1 V28"/><path d="M3 7 C10 12 20 12 27 7"/></g></svg>
<svg class="a" style="left:883px;top:57px;" width="17" height="17" viewBox="0 0 17 17"><path d="M2 16 V2 H12" stroke="#dfe2e6" stroke-width="1.6" fill="none"/><path d="M4 9 C7 5 9 3 14 2" stroke="#5b9ae0" stroke-width="1.3" fill="none"/><circle cx="13" cy="3" r="1.5" fill="#5b9ae0"/></svg>
<svg class="a" style="left:883px;top:80px;" width="17" height="17" viewBox="0 0 17 17"><path d="M2 16 V2 L14 11 H2" stroke="#dfe2e6" stroke-width="1.5" fill="none"/><circle cx="6" cy="12" r="1.6" fill="#5b9ae0"/><circle cx="11" cy="12" r="1.6" fill="#5b9ae0"/></svg>
<svg class="a" style="left:883px;top:103px;" width="17" height="17" viewBox="0 0 17 17"><path d="M2 16 V2 M15 16 V2" stroke="#dfe2e6" stroke-width="1.6"/><path d="M2 6 H15 M2 11 H15" stroke="#5b9ae0" stroke-width="1.3"/><path d="M4 4 C7 8 10 8 13 4" stroke="#5b9ae0" stroke-width="1" fill="none"/></svg>
<svg class="a" style="left:946px;top:62px;" width="34" height="19" viewBox="0 0 34 19"><path d="M3 15 L26 3" stroke="#dfe2e6" stroke-width="3.2"/><circle cx="3" cy="15" r="2.2" fill="#3b4453" stroke="#dfe2e6" stroke-width="1.2"/><circle cx="30" cy="13" r="1.8" fill="none" stroke="#dfe2e6" stroke-width="1.2"/></svg>
<svg class="a" style="left:998px;top:57px;" width="18" height="17" viewBox="0 0 18 17"><path d="M1 6 L6 2 L9 5 M11 3 H13 V7" stroke="#dfe2e6" stroke-width="1.3" fill="none"/><path d="M7 13 L15 9" stroke="#5b9ae0" stroke-width="1.5"/></svg>
<svg class="a" style="left:1021px;top:57px;" width="17" height="17" viewBox="0 0 17 17"><circle cx="8" cy="8" r="4" fill="#dfe2e6"/><path d="M10 2 A6 6 0 0 1 10 14" stroke="#dfe2e6" stroke-width="1.4" fill="none"/></svg>
<svg class="a" style="left:1044px;top:57px;" width="18" height="17" viewBox="0 0 18 17"><path d="M14 4 A6 6 0 1 0 15 8" stroke="#dfe2e6" stroke-width="1.8" fill="none"/><path d="M11 1 L15 4 L11 6" stroke="#dfe2e6" stroke-width="1.3" fill="none"/></svg>
<svg class="a" style="left:998px;top:80px;" width="18" height="18" viewBox="0 0 18 18"><path d="M4 2 V16 M14 2 V16" stroke="#dfe2e6" stroke-width="1.4"/><rect x="2" y="8" width="4" height="6" fill="#dfe2e6"/><rect x="12" y="8" width="4" height="6" fill="#dfe2e6"/><path d="M3 4 C6 0 12 0 15 4" stroke="#5b9ae0" stroke-width="1.3" fill="none"/></svg>
<svg class="a" style="left:1021px;top:82px;" width="18" height="13" viewBox="0 0 18 13"><path d="M1 6.5 H17" stroke="#dfe2e6" stroke-width="1.2"/><rect x="4" y="3" width="10" height="7" rx="3" fill="#dfe2e6"/><path d="M6 3 V10 M9 3 V10 M12 3 V10" stroke="#6a717c" stroke-width="0.8"/></svg>
<svg class="a" style="left:1044px;top:80px;" width="18" height="17" viewBox="0 0 18 17"><path d="M1 8.5 H5 M5 3 V14 L12 8.5 Z M12 8.5 H17" stroke="#dfe2e6" stroke-width="1.3" fill="none" stroke-dasharray=""/></svg>
<svg class="a" style="left:998px;top:103px;" width="18" height="18" viewBox="0 0 18 18"><circle cx="7" cy="5" r="3.5" fill="none" stroke="#dfe2e6" stroke-width="1.3"/><path d="M7 8.5 V14 M2 15 H13" stroke="#dfe2e6" stroke-width="1.5"/><path d="M8 14 C11 16 13 17 16 15" stroke="#5b9ae0" stroke-width="1.3" fill="none"/></svg>
<svg class="a" style="left:1033px;top:103px;" width="18" height="18" viewBox="0 0 18 18"><path d="M5 13 L15 3" stroke="#dfe2e6" stroke-width="3"/><path d="M1 12 H8 M5 10 L4 17" stroke="#5b9ae0" stroke-width="1.4"/><path d="M6 13 L5 17" stroke="#c04020" stroke-width="1.4"/></svg>
<svg class="a" style="left:1072px;top:69px;" width="17" height="15" viewBox="0 0 17 15"><path d="M0.5 13 C0.5 10 1 4 5 2 C8 0.5 13 1 15 5 C16 7 16.5 10 16.5 12 L12 13.5 Z" fill="#f0a830"/><path d="M3 8 C5 4 10 3 13 5 M8 2 V12" stroke="#c47f10" stroke-width="1" fill="none"/></svg>
<svg class="a" style="left:1095px;top:69px;" width="17" height="15" viewBox="0 0 17 15"><path d="M0.5 13 C0.5 10 1 4 5 2 C8 0.5 13 1 15 5 C16 7 16.5 10 16.5 12 L12 13.5 Z" fill="#f0a830"/><path d="M3 8 C5 4 10 3 13 5 M8 2 V12" stroke="#c47f10" stroke-width="1" fill="none"/><rect x="11" y="7" width="3" height="6" fill="#dfe2e6"/></svg>
<svg class="a" style="left:1117.5px;top:69px;" width="17" height="15" viewBox="0 0 17 15"><path d="M0.5 13 C0.5 10 1 4 5 2 C8 0.5 13 1 15 5 C16 7 16.5 10 16.5 12 L12 13.5 Z" fill="#f0a830"/><path d="M3 8 C5 4 10 3 13 5 M8 2 V12" stroke="#c47f10" stroke-width="1" fill="none"/><path d="M8 12 H14 M10 9 L7 12 L10 14" stroke="#dfe2e6" stroke-width="1.3" fill="none"/></svg>
<svg class="a" style="left:1139.5px;top:69px;" width="17" height="15" viewBox="0 0 17 15"><path d="M0.5 13 C0.5 10 1 4 5 2 C8 0.5 13 1 15 5 C16 7 16.5 10 16.5 12 L12 13.5 Z" fill="#f0a830"/><path d="M3 8 C5 4 10 3 13 5 M8 2 V12" stroke="#c47f10" stroke-width="1" fill="none"/><path d="M10 5 L15 11 L12 11 L13 14" stroke="#fff" stroke-width="1.2" fill="#333"/></svg>
<svg class="a" style="left:1196px;top:57px;" width="33" height="31" viewBox="0 0 33 31"><path d="M3 1 V30 M29 1 V30" stroke="#c8ccd2" stroke-width="1.5"/><path d="M4 9 H28" stroke="#5b9ae0" stroke-width="1.4" stroke-dasharray="1.5 0.8"/><path d="M4 9 L8 6.5 V11.5 Z M28 9 L24 6.5 V11.5 Z" fill="#5b9ae0"/></svg>
<svg class="a" style="left:1269px;top:58px;" width="31" height="30" viewBox="0 0 31 30"><path d="M3 2 H7 V7 H26 V22 H8 C4 22 2 24 2 26 Z" fill="#eceef0"/><rect x="2" y="1" width="5" height="25" rx="2" fill="#dfe2e6"/><path d="M28 15 V21 C28 24 26 25 23 25 H17 V21 L11 25.5 L17 30 V27 H23 C27 27 30 25 30 21 V15 Z" fill="#5b9ae0"/></svg>
<svg class="a" style="left:1320px;top:57px;" width="17" height="17" viewBox="0 0 17 17"><path d="M2 16 V1 H9" stroke="#dfe2e6" stroke-width="1.2" fill="none"/><path d="M5 6 C5 2 13 2 14 6 V13 C13 16 6 16 5 13 Z" stroke="#dfe2e6" stroke-width="1.4" fill="none"/></svg>
<svg class="a" style="left:1320px;top:80px;" width="17" height="17" viewBox="0 0 17 17"><path d="M1 15 H16 M3 15 V6 M14 15 V6 M3 7 L8 11 L14 7" stroke="#dfe2e6" stroke-width="1.2" fill="none"/><path d="M7 1 V5 C7 6 10 6 10 5 V1" stroke="#dfe2e6" stroke-width="1.1" fill="none"/></svg>
<svg class="a" style="left:1320px;top:103px;" width="17" height="18" viewBox="0 0 17 18"><rect x="2" y="3" width="6" height="9" fill="#dfe2e6"/><path d="M2 3 L5 1 H10 L8 3" fill="#aab0b8"/><path d="M13 1 V12" stroke="#5b9ae0" stroke-width="1.3"/><path d="M11 3 L13 1 L15 3 M11 10 L13 12 L15 10" stroke="#5b9ae0" stroke-width="1" fill="none"/><path d="M2 16 H10" stroke="#5b9ae0" stroke-width="1.2"/></svg>
<svg class="a" style="left:1473px;top:57px;" width="17" height="17" viewBox="0 0 17 17"><path d="M5 1 V11" stroke="#dfe2e6" stroke-width="1.5"/><path d="M2 11 H8 L5 15 Z" fill="#dfe2e6"/><path d="M10 4 H15 M10 8 H15" stroke="#5b9ae0" stroke-width="1.2"/><path d="M11 2 L9 4 L11 6 M11 6 L9 8 L11 10" stroke="#5b9ae0" stroke-width="1" fill="none"/></svg>
<svg class="a" style="left:1473px;top:80px;" width="18" height="18" viewBox="0 0 18 18"><path d="M5 1 V11" stroke="#dfe2e6" stroke-width="1.5"/><path d="M2 11 H8 L5 15 Z" fill="#dfe2e6"/><path d="M9 4 H14 M9 7 H14" stroke="#5b9ae0" stroke-width="1.2"/><path d="M7 16 C7 11 10 9 14 10 C17 11 17 15 17 16 Z" fill="#f0a830"/></svg>
<svg class="a" style="left:1473px;top:103px;" width="17" height="18" viewBox="0 0 17 18"><path d="M5 1 V11" stroke="#dfe2e6" stroke-width="1.5"/><path d="M2 11 H8 L5 15 Z" fill="#dfe2e6"/><path d="M10 10 H15 M10 14 H15" stroke="#5b9ae0" stroke-width="1.2"/><path d="M11 8 L9 10 L11 12 M11 12 L9 14 L11 16" stroke="#5b9ae0" stroke-width="1" fill="none"/></svg>
<svg class="a" style="left:1505px;top:57px;" width="16" height="17" viewBox="0 0 16 17"><rect x="1" y="1" width="10" height="9" fill="#e8eaec"/><path d="M2 3 H8 M2 5 H8 M2 7 H6" stroke="#7a828c" stroke-width="0.8"/><path d="M9 5 H15 M12 3 L15 5 L12 7" stroke="#5b9ae0" stroke-width="1.2" fill="none"/><rect x="1" y="9" width="13" height="7" fill="#b0392a"/><text x="7.5" y="15.3" font-size="6.2" font-weight="bold" text-anchor="middle" fill="#fff" font-family="Liberation Sans">MS</text></svg>
<svg class="a" style="left:1528px;top:57px;" width="16" height="17" viewBox="0 0 16 17"><rect x="1" y="1" width="10" height="9" fill="#e8eaec"/><path d="M2 3 H8 M2 5 H8 M2 7 H6" stroke="#7a828c" stroke-width="0.8"/><path d="M9 5 H15 M12 3 L15 5 L12 7" stroke="#5b9ae0" stroke-width="1.2" fill="none"/><rect x="1" y="9" width="13" height="7" fill="#b0392a"/><text x="7.5" y="15.3" font-size="6.2" font-weight="bold" text-anchor="middle" fill="#fff" font-family="Liberation Sans">FS</text></svg>
<svg class="a" style="left:1554px;top:57px;" width="16" height="17" viewBox="0 0 16 17"><rect x="1" y="1" width="10" height="9" fill="#e8eaec"/><path d="M2 3 H8 M2 5 H8 M2 7 H6" stroke="#7a828c" stroke-width="0.8"/><path d="M9 5 H15 M12 3 L15 5 L12 7" stroke="#5b9ae0" stroke-width="1.2" fill="none"/><rect x="1" y="9" width="13" height="7" fill="#d8dbde"/><text x="7.5" y="15.3" font-size="6.2" font-weight="bold" text-anchor="middle" fill="#333a44" font-family="Liberation Sans">DH</text></svg>
<svg class="a" style="left:1576.5px;top:57px;" width="16" height="17" viewBox="0 0 16 17"><rect x="1" y="1" width="10" height="9" fill="#e8eaec"/><path d="M2 3 H8 M2 5 H8 M2 7 H6" stroke="#7a828c" stroke-width="0.8"/><path d="M9 5 H15 M12 3 L15 5 L12 7" stroke="#5b9ae0" stroke-width="1.2" fill="none"/><rect x="1" y="9" width="13" height="7" fill="#d8dbde"/><text x="7.5" y="15.3" font-size="6.2" font-weight="bold" text-anchor="middle" fill="#333a44" font-family="Liberation Sans">MDH</text></svg>
<svg class="a" style="left:1603px;top:57px;" width="16" height="17" viewBox="0 0 16 17"><rect x="1" y="1" width="10" height="9" fill="#e8eaec"/><path d="M2 3 H8 M2 5 H8 M2 7 H6" stroke="#7a828c" stroke-width="0.8"/><path d="M9 5 H15 M12 3 L15 5 L12 7" stroke="#5b9ae0" stroke-width="1.2" fill="none"/><rect x="1" y="9" width="13" height="7" fill="#e89a30"/><text x="7.5" y="15.3" font-size="6.2" font-weight="bold" text-anchor="middle" fill="#fff" font-family="Liberation Sans">XML</text></svg>
<svg class="a" style="left:1505px;top:80px;" width="17" height="18" viewBox="0 0 17 18"><rect x="1" y="1" width="11" height="10" fill="#e8eaec"/><text x="2" y="8" font-size="7" font-weight="bold" fill="#1f8a4a" font-family="Liberation Sans">X</text><path d="M9 6 H16 M13 4 L16 6 L13 8" stroke="#5b9ae0" stroke-width="1.2" fill="none"/><rect x="1" y="10" width="13" height="7" fill="#1f8a4a"/><text x="7.5" y="16.3" font-size="6.5" font-weight="bold" text-anchor="middle" fill="#fff" font-family="Liberation Sans">MT</text></svg>
<svg class="a" style="left:1505px;top:103px;" width="17" height="18" viewBox="0 0 17 18"><rect x="4" y="1" width="11" height="10" fill="#e8eaec"/><path d="M1 5 H9 M6 3 L9 5 L6 7" stroke="#5b9ae0" stroke-width="1.4" fill="none"/><rect x="2" y="10" width="13" height="7" fill="#1f8a4a"/><text x="8.5" y="16.3" font-size="6.5" font-weight="bold" text-anchor="middle" fill="#fff" font-family="Liberation Sans">MT</text></svg>
<svg class="a" style="left:14px;top:147px;" width="264" height="26" viewBox="0 0 264 26"><path d="M4 23 C9 23 10 20 12 12 C14 4 16 1.5 22 1.5 H118 C124 1.5 126 4 126 10 V23 Z" fill="#2f3643"/><path d="M122 23 C128 23 129 20 130 12 C132 4 133 1.5 140 1.5 H232 C238 1.5 240 4 242 12 C244 20 246 23 251 23 Z" fill="#3b4453"/><path d="M247 23 C250 23 251 18 252 14 C253 10 254 8 258 8 H262 C265 8 266 10 265 14 C264 18 262 23 258 23 Z" fill="#323a47"/></svg>
<svg class="a" style="left:233px;top:153px;" width="10" height="10" viewBox="0 0 10 10"><path d="M1.5 1.5 L8.5 8.5 M8.5 1.5 L1.5 8.5" stroke="#c8ccd2" stroke-width="1.6"/></svg>
<svg class="a" style="left:265px;top:154px;" width="11" height="11" viewBox="0 0 11 11"><path d="M5.5 1 V10 M1 5.5 H10" stroke="#c8ccd2" stroke-width="1.7"/></svg>
<div class="a" style="left:3px;top:169px;width:1797px;height:4px;background:#3b4453;"></div>
<div class="a" style="left:26px;top:173px;width:876px;height:761px;background:#212830;"></div>
<div class="a" style="left:926px;top:173px;width:874px;height:761px;background:#212830;"></div>
<div class="a" style="left:4px;top:178px;width:20px;height:787px;background:#3b4453;"></div>
<div class="a" style="left:904px;top:178px;width:20px;height:756px;background:#3b4453;"></div>
<svg class="a" style="left:8px;top:180px;" width="12" height="5" viewBox="0 0 12 5"><rect x="0.0" y="0.0" width="1.3" height="1.3" fill="#c8ccd2"/><rect x="0.0" y="2.5" width="1.3" height="1.3" fill="#c8ccd2"/><rect x="2.4" y="0.0" width="1.3" height="1.3" fill="#c8ccd2"/><rect x="2.4" y="2.5" width="1.3" height="1.3" fill="#c8ccd2"/><rect x="4.8" y="0.0" width="1.3" height="1.3" fill="#c8ccd2"/><rect x="4.8" y="2.5" width="1.3" height="1.3" fill="#c8ccd2"/><rect x="7.2" y="0.0" width="1.3" height="1.3" fill="#c8ccd2"/><rect x="7.2" y="2.5" width="1.3" height="1.3" fill="#c8ccd2"/><rect x="9.6" y="0.0" width="1.3" height="1.3" fill="#c8ccd2"/><rect x="9.6" y="2.5" width="1.3" height="1.3" fill="#c8ccd2"/></svg>
<svg class="a" style="left:908px;top:180px;" width="12" height="5" viewBox="0 0 12 5"><rect x="0.0" y="0.0" width="1.3" height="1.3" fill="#c8ccd2"/><rect x="0.0" y="2.5" width="1.3" height="1.3" fill="#c8ccd2"/><rect x="2.4" y="0.0" width="1.3" height="1.3" fill="#c8ccd2"/><rect x="2.4" y="2.5" width="1.3" height="1.3" fill="#c8ccd2"/><rect x="4.8" y="0.0" width="1.3" height="1.3" fill="#c8ccd2"/><rect x="4.8" y="2.5" width="1.3" height="1.3" fill="#c8ccd2"/><rect x="7.2" y="0.0" width="1.3" height="1.3" fill="#c8ccd2"/><rect x="7.2" y="2.5" width="1.3" height="1.3" fill="#c8ccd2"/><rect x="9.6" y="0.0" width="1.3" height="1.3" fill="#c8ccd2"/><rect x="9.6" y="2.5" width="1.3" height="1.3" fill="#c8ccd2"/></svg>
<span class="t" style="left:8px;top:607.5px;font-size:11.2px;line-height:11px;color:#d7dbe0;transform:rotate(-90deg);transform-origin:0 0">Eigenschaften</span>
<span class="t" style="left:908px;top:607.5px;font-size:11.2px;line-height:11px;color:#d7dbe0;transform:rotate(-90deg);transform-origin:0 0">Eigenschaften</span>
<span class="t" style="left:30.0px;top:180.93px;font-size:11.30px;line-height:11.30px;color:#d6dade;font-family:'Liberation Sans',sans-serif;letter-spacing:0.074px;">[−][Benutzerdefinierte Ansicht][2D-Drahtkörper]</span>
<span class="t" style="left:930.0px;top:180.93px;font-size:11.30px;line-height:11.30px;color:#d6dade;font-family:'Liberation Sans',sans-serif;">[−][Benutzerdefinierte Ansicht][Realistisch]</span>
<svg class="a" style="left:26px;top:173px;color:#63d49d" width="876" height="761" viewBox="26 173 876 761"><g fill="none" stroke="#63d49d" stroke-width="1.3" stroke-linejoin="round"><path d="M264.4 310.0 L283.3 400.8 L308.5 480.0 L345.0 545.0"/><path d="M343.0 229.4 L300.0 255.0 L265.6 276.0"/><path d="M26.0 531.0 L236.7 366.1"/><path d="M236.7 366.1 L417.0 299.0 L476.0 275.8 L709.6 173.0"/><path d="M395.6 372.8 L822.6 173.0"/><path d="M395.6 372.8 L572.5 402.0"/><path d="M351.1 397.2 L478.0 416.5"/><path d="M478.0 416.8 L603.0 367.5 L749.0 312.2 L900.0 255.5"/><path d="M572.5 400.8 L749.0 312.2 L900.0 232.7"/><path d="M476.0 386.3 L572.5 402.8"/><path d="M750.2 312.0 L750.2 427.0"/><path d="M478.0 544.7 L750.0 420.0 L900.0 340.6"/><path d="M572.5 528.7 L750.0 427.0 L900.0 352.0"/><path d="M476.0 581.6 L572.5 529.5"/><path d="M476.0 461.0 L572.5 402.5"/><path d="M476.0 447.0 L572.5 402.5"/><path d="M409.0 476.0 L624.6 518.8"/><path d="M572.5 523.0 L618.0 523.0 L618.0 529.5 L614.0 529.5"/><path d="M366.5 507.5 L520.4 532.6"/><path d="M497.6 654.0 L798.0 462.2"/><path d="M798.0 462.2 L900.0 411.4"/><path d="M798.0 466.0 L900.0 565.0"/><path d="M798.0 466.0 L900.0 485.0"/><path d="M754.0 562.5 L900.0 593.0"/><path d="M798.5 585.4 L844.0 585.4 L844.0 591.0 L840.0 591.0"/><path d="M900.0 534.6 L798.0 591.0 L684.0 654.0"/><path d="M900.0 608.0 L819.0 654.0"/><path d="M900.0 632.0 L857.0 654.0"/><path d="M26.0 691.8 L90.0 654.0 L292.6 529.5"/><path d="M26.0 739.4 L168.0 654.0 L476.0 463.5"/><path d="M26.0 766.0 L256.0 654.0 L478.0 544.7"/><path d="M26.0 824.8 L351.0 654.0 L476.0 577.8"/><path d="M54.0 934.0 L476.0 668.0 L497.0 654.0"/><path d="M171.6 934.0 L476.0 771.6 L684.0 654.0"/><path d="M311.6 934.0 L476.0 844.4 L819.0 654.0"/><path d="M317.2 934.0 L476.0 850.0 L857.0 654.0"/><path d="M292.6 529.5 L478.0 416.5"/><path d="M295.6 530.0 L481.0 417.5"/><path d="M341.0 509.0 L476.0 447.0"/><path d="M387.9 519.0 L387.9 627.0"/><path d="M350 235 C362 262 378 290 417 299"/><path d="M344.4 395.6 L480.0 356.7 L873.4 173.0"/><path d="M793.8 934.0 L900.3 705.8"/><path d="M478.0 416.5 L476.0 544.7 L483.6 654.0 L499.8 934.0"/><path d="M798.0 462.2 L798.0 591.0 L793.4 654.0 L775.6 934.0"/><path d="M572.5 402.0 L572.5 528.7 L564.4 654.0 L547.4 917.2"/><path d="M340.0 428.7 L422.0 654.0 L476.0 796.8 L524.2 931.2"/><path d="M348.6 412.0 L349.0 600.0"/><path d="M311.2 400.0 L311.7 866.0"/><path d="M344.4 295.0 L314.4 310.6 L258.9 341.7"/><path d="M345.6 259.4 L345.6 301.0"/><path d="M257.8 242.8 L278.9 277.2"/><path d="M279.4 240.0 L270.0 262.8 L277.0 268.0 L270.0 274.0"/><path d="M255.6 278.3 L290.0 281.7"/><path d="M218.9 296.0 L218.9 316.7"/><path d="M218.9 302.8 L311.0 330.0"/><path d="M266.7 322.2 L311.0 330.0"/><path d="M254.4 310.0 L254.4 324.4"/><path d="M258.3 304.4 L258.3 350.5"/><path d="M236.7 366.1 L236.7 352.2 L226.0 332.0"/><path d="M236.7 352.2 L247.0 336.0"/><path d="M284.4 320.0 L296.7 312.8 L319.4 317.2 L306.7 324.4 L284.4 320.0"/><path d="M284.4 320.0 L275.2 654.0 L267.4 887.8"/><path d="M296.7 312.8 L296.7 866.8"/><path d="M306.7 324.4 L307.4 897.6"/><path d="M319.4 317.2 L328.4 654.0 L335.4 878.0"/><path d="M292.2 386.1 L335.6 361.1"/><path d="M292.2 386.1 L296.7 390.0"/><path d="M255.0 894.3 L293.4 875.2 L349.4 883.6 L308.8 904.6 L255.0 894.3"/><path d="M262.0 892.0 L296.0 878.0 L341.0 885.0 L307.0 900.0 L262.0 892.0"/><path d="M285 400 C300 470 320 520 343.4 544.7"/><path d="M343.4 544.7 L343.4 600"/><ellipse cx="345.6" cy="232.0" rx="5" ry="1.6"/><ellipse cx="345.6" cy="234.8" rx="5" ry="1.6"/><ellipse cx="345.6" cy="237.5" rx="5" ry="1.6"/><ellipse cx="345.6" cy="240.2" rx="5" ry="1.6"/><ellipse cx="345.6" cy="243.0" rx="5" ry="1.6"/><ellipse cx="345.6" cy="245.8" rx="5" ry="1.6"/><ellipse cx="345.6" cy="248.5" rx="5" ry="1.6"/><ellipse cx="345.6" cy="251.2" rx="5" ry="1.6"/><ellipse cx="345.6" cy="254.0" rx="5" ry="1.6"/><ellipse cx="345.6" cy="228" rx="4" ry="2"/><ellipse cx="345.6" cy="256.5" rx="3.5" ry="1.8"/><ellipse cx="257.5" cy="280.0" rx="4.5" ry="1.6"/><ellipse cx="257.5" cy="282.8" rx="4.5" ry="1.6"/><ellipse cx="257.5" cy="285.6" rx="4.5" ry="1.6"/><ellipse cx="257.5" cy="288.3" rx="4.5" ry="1.6"/><ellipse cx="257.5" cy="291.1" rx="4.5" ry="1.6"/><ellipse cx="257.5" cy="293.9" rx="4.5" ry="1.6"/><ellipse cx="257.5" cy="296.7" rx="4.5" ry="1.6"/><ellipse cx="257.5" cy="299.4" rx="4.5" ry="1.6"/><ellipse cx="257.5" cy="302.2" rx="4.5" ry="1.6"/><ellipse cx="257.5" cy="305.0" rx="4.5" ry="1.6"/><ellipse cx="266.4" cy="287.0" rx="4.5" ry="1.6"/><ellipse cx="266.4" cy="289.7" rx="4.5" ry="1.6"/><ellipse cx="266.4" cy="292.4" rx="4.5" ry="1.6"/><ellipse cx="266.4" cy="295.1" rx="4.5" ry="1.6"/><ellipse cx="266.4" cy="297.9" rx="4.5" ry="1.6"/><ellipse cx="266.4" cy="300.6" rx="4.5" ry="1.6"/><ellipse cx="266.4" cy="303.3" rx="4.5" ry="1.6"/><ellipse cx="266.4" cy="306.0" rx="4.5" ry="1.6"/><ellipse cx="279" cy="289.0" rx="6.5" ry="1.6"/><ellipse cx="279" cy="291.6" rx="6.5" ry="1.6"/><ellipse cx="279" cy="294.2" rx="6.5" ry="1.6"/><ellipse cx="279" cy="296.9" rx="6.5" ry="1.6"/><ellipse cx="279" cy="299.5" rx="6.5" ry="1.6"/><ellipse cx="279" cy="302.1" rx="6.5" ry="1.6"/><ellipse cx="279" cy="304.8" rx="6.5" ry="1.6"/><ellipse cx="279" cy="307.4" rx="6.5" ry="1.6"/><ellipse cx="279" cy="310.0" rx="6.5" ry="1.6"/><path d="M217 318 L236 347" stroke-width="6" stroke-dasharray="1 1.2"/><path d="M256 324 L239 347" stroke-width="6" stroke-dasharray="1 0.8"/><path d="M339 361 L359 358 L362 374 Z" fill="currentColor" fill-opacity="0.45"/><ellipse cx="366.0" cy="365.0" rx="2.5" ry="4.5"/><ellipse cx="372.0" cy="367.0" rx="2.5" ry="4.5"/><ellipse cx="378.0" cy="369.0" rx="2.5" ry="4.5"/><ellipse cx="384.0" cy="371.0" rx="2.5" ry="4.5"/><path d="M293 386 L314 382 L317 398 Z" fill="currentColor" fill-opacity="0.45"/><ellipse cx="321.0" cy="390.0" rx="2.5" ry="4.5"/><ellipse cx="327.3" cy="391.7" rx="2.5" ry="4.5"/><ellipse cx="333.7" cy="393.3" rx="2.5" ry="4.5"/><ellipse cx="340.0" cy="395.0" rx="2.5" ry="4.5"/><path d="M287 400 L302 392 L304 410 Z" fill="currentColor" fill-opacity="0.45"/><ellipse cx="301" cy="413" rx="5" ry="6" fill="currentColor" fill-opacity="0.35"/><ellipse cx="298.5" cy="411" rx="11.5" ry="17"/><path d="M326 407 L341 399 L343 414 Z" fill="currentColor" fill-opacity="0.45"/><ellipse cx="338.5" cy="420.5" rx="6" ry="6.5" fill="currentColor" fill-opacity="0.35"/><ellipse cx="338" cy="416" rx="11" ry="18"/><path d="M296 513 L316 521 L318 541 Z" fill="currentColor" fill-opacity="0.45"/><ellipse cx="313.0" cy="520.0" rx="3" ry="4.5"/><ellipse cx="317.5" cy="517.0" rx="3" ry="4.5"/><ellipse cx="322.0" cy="514.0" rx="3" ry="4.5"/><path d="M342 492 L362 500 L364 518 Z" fill="currentColor" fill-opacity="0.45"/><ellipse cx="359.0" cy="500.0" rx="3" ry="4.5"/><ellipse cx="363.5" cy="497.0" rx="3" ry="4.5"/><ellipse cx="368.0" cy="494.0" rx="3" ry="4.5"/><ellipse cx="311" cy="592.0" rx="12.5" ry="3.2"/><ellipse cx="311" cy="602.0" rx="12.5" ry="3.2"/><ellipse cx="311" cy="612.0" rx="12.5" ry="3.2"/><ellipse cx="311" cy="622.0" rx="12.5" ry="3.2"/><ellipse cx="311" cy="632.0" rx="12.5" ry="3.2"/><ellipse cx="311" cy="642.0" rx="12.5" ry="3.2"/><ellipse cx="311" cy="652.0" rx="12.5" ry="3.2"/><ellipse cx="311" cy="662.0" rx="12.5" ry="3.2"/><ellipse cx="311" cy="672.0" rx="12.5" ry="3.2"/><ellipse cx="311" cy="682.0" rx="12.5" ry="3.2"/><ellipse cx="311" cy="692.0" rx="12.5" ry="3.2"/><ellipse cx="311" cy="702.0" rx="12.5" ry="3.2"/><ellipse cx="349" cy="599.0" rx="12.5" ry="3.2"/><ellipse cx="349" cy="609.1" rx="12.5" ry="3.2"/><ellipse cx="349" cy="619.2" rx="12.5" ry="3.2"/><ellipse cx="349" cy="629.3" rx="12.5" ry="3.2"/><ellipse cx="349" cy="639.4" rx="12.5" ry="3.2"/><ellipse cx="349" cy="649.5" rx="12.5" ry="3.2"/><ellipse cx="349" cy="659.5" rx="12.5" ry="3.2"/><ellipse cx="349" cy="669.6" rx="12.5" ry="3.2"/><ellipse cx="349" cy="679.7" rx="12.5" ry="3.2"/><ellipse cx="349" cy="689.8" rx="12.5" ry="3.2"/><ellipse cx="349" cy="699.9" rx="12.5" ry="3.2"/><ellipse cx="349" cy="710.0" rx="12.5" ry="3.2"/><circle cx="478" cy="416.5" r="4.6" fill="currentColor"/><circle cx="572.5" cy="402" r="4.6" fill="currentColor"/><circle cx="572.5" cy="528.7" r="4.6" fill="currentColor"/><circle cx="478" cy="544.7" r="4.6" fill="currentColor"/><circle cx="798" cy="462.2" r="4.6" fill="currentColor"/><circle cx="798" cy="591" r="4.6" fill="currentColor"/><circle cx="343.4" cy="544.7" r="4.6" fill="currentColor"/><circle cx="343.4" cy="652" r="4.6" fill="currentColor"/></g><g fill="#7ef9b9"><path d="M26 772.6 L47 763.5 Q51 762 56 763.5 L108 778.5 Q118 775 128 777 Q132 780 124 784 L180 799.5 Q187 802 182 806 Q178 807.5 172 806 L116 788 Q108 793 96 790 Q92 786 96 784 L52 772.5 L26 785 Z"/><path d="M44 839 L89 817 Q98 814 99 819 Q98 824 90 827 L52 845 Q44 848 42 843 Z"/><path d="M26 853 Q60 856 61 867 Q61 878 26 883 L26 875 Q45 872 45 867 Q45 862 26 860 Z"/></g><g stroke="#b9bdc3" stroke-width="1.3" fill="none"><path d="M83.4 858 V904.6 L40 911.6 M83.4 904.6 L103.8 918.6"/><path d="M88 846.5 H99 L88 857 H99.5"/><path d="M46 899 L56.5 910 M56.5 899 L46 910"/><path d="M106 902 L111.5 908 L117 902 M111.5 908 V913.5"/><ellipse cx="83" cy="905" rx="5" ry="2"/></g></svg>
<svg class="a" style="left:926px;top:173px" width="874" height="761" viewBox="26 173 874 761"><path d="M253.6 892 L299.4 875.5 L348.9 880.6 L309.5 904.7 Z" fill="#4f9d79" stroke="#7d8784" stroke-width="0.8"/><g stroke-linecap="butt"><path d="M282.6 345.0 L300 384.5 M300 345.0 L281.6 384.5" stroke="#4f9d79" stroke-width="4.5"/><path d="M282.6 345.0 L300 345.0" stroke="#4f9d79" stroke-width="2.5"/><path d="M308 345.0 L319.9 384.5 M318.8 345.0 L308 384.5" stroke="#4f9d79" stroke-width="4"/><path d="M309 351.0 L317.9 378.5" stroke="#5fb98c" stroke-width="2"/><path d="M281.6 384.5 L300 424.0 M300 384.5 L280.6 424.0" stroke="#4f9d79" stroke-width="4.5"/><path d="M281.6 384.5 L300 384.5" stroke="#4f9d79" stroke-width="2.5"/><path d="M308 384.5 L321.1 424.0 M319.9 384.5 L308 424.0" stroke="#4f9d79" stroke-width="4"/><path d="M309 390.5 L319.1 418.0" stroke="#5fb98c" stroke-width="2"/><path d="M280.6 424.0 L300 463.5 M300 424.0 L279.7 463.5" stroke="#4f9d79" stroke-width="4.5"/><path d="M280.6 424.0 L300 424.0" stroke="#4f9d79" stroke-width="2.5"/><path d="M308 424.0 L322.3 463.5 M321.1 424.0 L308 463.5" stroke="#4f9d79" stroke-width="4"/><path d="M309 430.0 L320.3 457.5" stroke="#5fb98c" stroke-width="2"/><path d="M279.7 463.5 L300 503.0 M300 463.5 L278.7 503.0" stroke="#4f9d79" stroke-width="4.5"/><path d="M279.7 463.5 L300 463.5" stroke="#4f9d79" stroke-width="2.5"/><path d="M308 463.5 L323.5 503.0 M322.3 463.5 L308 503.0" stroke="#4f9d79" stroke-width="4"/><path d="M309 469.5 L321.5 497.0" stroke="#5fb98c" stroke-width="2"/><path d="M278.7 503.0 L300 542.5 M300 503.0 L277.7 542.5" stroke="#4f9d79" stroke-width="4.5"/><path d="M278.7 503.0 L300 503.0" stroke="#4f9d79" stroke-width="2.5"/><path d="M308 503.0 L324.7 542.5 M323.5 503.0 L308 542.5" stroke="#4f9d79" stroke-width="4"/><path d="M309 509.0 L322.7 536.5" stroke="#5fb98c" stroke-width="2"/><path d="M277.7 542.5 L300 582.0 M300 542.5 L276.7 582.0" stroke="#4f9d79" stroke-width="4.5"/><path d="M277.7 542.5 L300 542.5" stroke="#4f9d79" stroke-width="2.5"/><path d="M308 542.5 L325.9 582.0 M324.7 542.5 L308 582.0" stroke="#4f9d79" stroke-width="4"/><path d="M309 548.5 L323.9 576.0" stroke="#5fb98c" stroke-width="2"/><path d="M276.7 582.0 L300 621.5 M300 582.0 L275.7 621.5" stroke="#4f9d79" stroke-width="4.5"/><path d="M276.7 582.0 L300 582.0" stroke="#4f9d79" stroke-width="2.5"/><path d="M308 582.0 L327.0 621.5 M325.9 582.0 L308 621.5" stroke="#4f9d79" stroke-width="4"/><path d="M309 588.0 L325.0 615.5" stroke="#5fb98c" stroke-width="2"/><path d="M275.7 621.5 L300 661.0 M300 621.5 L274.7 661.0" stroke="#4f9d79" stroke-width="4.5"/><path d="M275.7 621.5 L300 621.5" stroke="#4f9d79" stroke-width="2.5"/><path d="M308 621.5 L328.2 661.0 M327.0 621.5 L308 661.0" stroke="#4f9d79" stroke-width="4"/><path d="M309 627.5 L326.2 655.0" stroke="#5fb98c" stroke-width="2"/><path d="M274.7 661.0 L300 700.5 M300 661.0 L273.7 700.5" stroke="#4f9d79" stroke-width="4.5"/><path d="M274.7 661.0 L300 661.0" stroke="#4f9d79" stroke-width="2.5"/><path d="M308 661.0 L329.4 700.5 M328.2 661.0 L308 700.5" stroke="#4f9d79" stroke-width="4"/><path d="M309 667.0 L327.4 694.5" stroke="#5fb98c" stroke-width="2"/><path d="M273.7 700.5 L300 740.0 M300 700.5 L272.8 740.0" stroke="#4f9d79" stroke-width="4.5"/><path d="M273.7 700.5 L300 700.5" stroke="#4f9d79" stroke-width="2.5"/><path d="M308 700.5 L330.6 740.0 M329.4 700.5 L308 740.0" stroke="#4f9d79" stroke-width="4"/><path d="M309 706.5 L328.6 734.0" stroke="#5fb98c" stroke-width="2"/><path d="M272.8 740.0 L300 779.5 M300 740.0 L271.8 779.5" stroke="#4f9d79" stroke-width="4.5"/><path d="M272.8 740.0 L300 740.0" stroke="#4f9d79" stroke-width="2.5"/><path d="M308 740.0 L331.8 779.5 M330.6 740.0 L308 779.5" stroke="#4f9d79" stroke-width="4"/><path d="M309 746.0 L329.8 773.5" stroke="#5fb98c" stroke-width="2"/><path d="M271.8 779.5 L300 819.0 M300 779.5 L270.8 819.0" stroke="#4f9d79" stroke-width="4.5"/><path d="M271.8 779.5 L300 779.5" stroke="#4f9d79" stroke-width="2.5"/><path d="M308 779.5 L333.0 819.0 M331.8 779.5 L308 819.0" stroke="#4f9d79" stroke-width="4"/><path d="M309 785.5 L331.0 813.0" stroke="#5fb98c" stroke-width="2"/><path d="M270.8 819.0 L300 858.5 M300 819.0 L269.8 858.5" stroke="#4f9d79" stroke-width="4.5"/><path d="M270.8 819.0 L300 819.0" stroke="#4f9d79" stroke-width="2.5"/><path d="M308 819.0 L334.2 858.5 M333.0 819.0 L308 858.5" stroke="#4f9d79" stroke-width="4"/><path d="M309 825.0 L332.2 852.5" stroke="#5fb98c" stroke-width="2"/></g><path d="M282 325 L287 325 L273 888 L267 888 Z" fill="#4f9d79" stroke="#7d8784" stroke-width="0.7"/><path d="M299.5 325 L307 325 L309.5 896 L299 896 Z" fill="#4f9d79" stroke="#7d8784" stroke-width="0.7"/><path d="M316 320 L320.5 320 L336 883 L329 883 Z" fill="#4f9d79" stroke="#7d8784" stroke-width="0.7"/><path d="M284 323 L296 317 L318.5 320 L318.5 347 L284 347 Z" fill="#4f9d79" stroke="#7d8784" stroke-width="0.8"/><path d="M284 323 L307 327 L318.5 320 M307 327 V347" stroke="#7d8784" stroke-width="0.8" fill="none"/><path d="M255.5 339 L348.5 290 L348.5 297 L255.5 346 Z" fill="#4f9d79" stroke="#7d8784" stroke-width="0.7"/><rect x="344" y="259" width="3" height="34" fill="#4f9d79"/><rect x="341" y="225" width="9" height="34" rx="2" fill="#4f9d79" stroke="#7d8784" stroke-width="0.7"/><rect x="253" y="274" width="9" height="37" fill="#4f9d79" stroke="#7d8784" stroke-width="0.7"/><rect x="263" y="282.5" width="7.5" height="28.5" fill="#4f9d79" stroke="#7d8784" stroke-width="0.7"/><rect x="272" y="284" width="13.5" height="28.5" fill="#4f9d79" stroke="#7d8784" stroke-width="0.7"/><path d="M217 302 L255.5 309.5 M217 302 V317 M255.5 309.5 L257.7 342.5 M236 348.5 V365" stroke="#4f9d79" stroke-width="4"/><path d="M215 318.5 L235 348.5 M254.7 321.5 L238 348.5" stroke="#4f9d79" stroke-width="7"/><path d="M257.7 242.7 L278 266 M279.5 239 L266 264.5 M266 270 L280 263" stroke="#4f9d79" stroke-width="3"/><path d="M293.5 377 L341.5 351.5 L341.5 358.5 L293.5 384 Z" fill="#4f9d79" stroke="#7d8784" stroke-width="0.7"/><path d="M341.5 357 L399 372.2 M296 388 L355.6 396.7" stroke="#7d8784" stroke-width="2.2"/><ellipse cx="356" cy="363.0" rx="2.2" ry="4" fill="#4f9d79" stroke="#7d8784" stroke-width="0.6"/><ellipse cx="362" cy="364.6" rx="2.2" ry="4" fill="#4f9d79" stroke="#7d8784" stroke-width="0.6"/><ellipse cx="368" cy="366.2" rx="2.2" ry="4" fill="#4f9d79" stroke="#7d8784" stroke-width="0.6"/><ellipse cx="374" cy="367.8" rx="2.2" ry="4" fill="#4f9d79" stroke="#7d8784" stroke-width="0.6"/><ellipse cx="323" cy="391.5" rx="2.2" ry="4" fill="#4f9d79" stroke="#7d8784" stroke-width="0.6"/><ellipse cx="329" cy="392.5" rx="2.2" ry="4" fill="#4f9d79" stroke="#7d8784" stroke-width="0.6"/><ellipse cx="335" cy="393.5" rx="2.2" ry="4" fill="#4f9d79" stroke="#7d8784" stroke-width="0.6"/><ellipse cx="341" cy="394.5" rx="2.2" ry="4" fill="#4f9d79" stroke="#7d8784" stroke-width="0.6"/><ellipse cx="338" cy="417.5" rx="11" ry="18.5" fill="#5cb086"/><ellipse cx="341.5" cy="416.5" rx="11" ry="18.5" fill="#4f9d79" stroke="#7d8784" stroke-width="0.6"/><path d="M348.3 435 V600" stroke="#7d8784" stroke-width="1"/><path d="M335.4 602 Q335.4 598 348 598 Q361 598 361 602 V711 Q361 715 348 715 Q335.4 715 335.4 711 Z" fill="#4f9d79" stroke="#7d8784" stroke-width="0.7"/><path d="M289 527.6 L481 417 M296.8 532 L578.7 400.6" stroke="#4f9d79" stroke-width="4.5"/><path d="M289 527.6 L481 417 M296.8 532 L578.7 400.6" stroke="#5fb98c" stroke-width="1.2"/><path d="M346.3 504.8 L520.3 532.7 M411 478 L624 520" stroke="#6f9a86" stroke-width="2.6"/><path d="M754 562.5 L900 593" stroke="#4f9d79" stroke-width="3"/><path d="M793.5 461.8 L900 565" stroke="#4f9d79" stroke-width="4.5"/><g fill="none" stroke="#8b9095" stroke-width="1.1"><path d="M264.4 310.0 L283.3 400.8 L308.5 480.0 L345.0 545.0"/><path d="M343.0 229.4 L300.0 255.0 L265.6 276.0"/><path d="M26.0 531.0 L236.7 366.1"/><path d="M236.7 366.1 L417.0 299.0 L476.0 275.8 L709.6 173.0"/><path d="M395.6 372.8 L822.6 173.0"/><path d="M395.6 372.8 L572.5 402.0"/><path d="M351.1 397.2 L478.0 416.5"/><path d="M478.0 416.8 L603.0 367.5 L749.0 312.2 L900.0 255.5"/><path d="M572.5 400.8 L749.0 312.2 L900.0 232.7"/><path d="M476.0 386.3 L572.5 402.8"/><path d="M750.2 312.0 L750.2 427.0"/><path d="M478.0 544.7 L750.0 420.0 L900.0 340.6"/><path d="M572.5 528.7 L750.0 427.0 L900.0 352.0"/><path d="M476.0 581.6 L572.5 529.5"/><path d="M476.0 461.0 L572.5 402.5"/><path d="M476.0 447.0 L572.5 402.5"/><path d="M409.0 476.0 L624.6 518.8"/><path d="M572.5 523.0 L618.0 523.0 L618.0 529.5 L614.0 529.5"/><path d="M366.5 507.5 L520.4 532.6"/><path d="M497.6 654.0 L798.0 462.2"/><path d="M798.0 462.2 L900.0 411.4"/><path d="M798.0 466.0 L900.0 565.0"/><path d="M798.0 466.0 L900.0 485.0"/><path d="M754.0 562.5 L900.0 593.0"/><path d="M798.5 585.4 L844.0 585.4 L844.0 591.0 L840.0 591.0"/><path d="M900.0 534.6 L798.0 591.0 L684.0 654.0"/><path d="M900.0 608.0 L819.0 654.0"/><path d="M900.0 632.0 L857.0 654.0"/><path d="M26.0 691.8 L90.0 654.0 L292.6 529.5"/><path d="M26.0 739.4 L168.0 654.0 L476.0 463.5"/><path d="M26.0 766.0 L256.0 654.0 L478.0 544.7"/><path d="M26.0 824.8 L351.0 654.0 L476.0 577.8"/><path d="M54.0 934.0 L476.0 668.0 L497.0 654.0"/><path d="M171.6 934.0 L476.0 771.6 L684.0 654.0"/><path d="M311.6 934.0 L476.0 844.4 L819.0 654.0"/><path d="M317.2 934.0 L476.0 850.0 L857.0 654.0"/><path d="M292.6 529.5 L478.0 416.5"/><path d="M295.6 530.0 L481.0 417.5"/><path d="M341.0 509.0 L476.0 447.0"/><path d="M387.9 519.0 L387.9 627.0"/><path d="M349 232 L417.4 298"/><path d="M352 415.6 L873.4 173"/><path d="M346.7 394.4 L399 372.2"/></g><g stroke-width="3" fill="none"><path d="M31.7 890 L71.7 882.5" stroke="#c2705a"/><path d="M71.7 882.5 L94.6 897.8" stroke="#4fa05f"/><path d="M71.7 838.7 V882.5" stroke="#6a9ad8"/></g><g stroke-width="1.2" fill="none"><path d="M29 876 L40.5 887.5 M40.5 876 L29 887.5" stroke="#c2705a"/><path d="M91.5 881 L96.7 886.5 L102 881 M96.7 886.5 V892" stroke="#4fa05f"/><path d="M71 825.5 H83 L71 836.5 H83" stroke="#6a9ad8"/></g></svg>
<div class="a" style="left:26px;top:934px;width:1771px;height:35px;background:#2c333e;"></div>
<div class="a" style="left:79px;top:936px;width:1717px;height:32px;background:#ffffff;border-radius:2px"></div>
<svg class="a" style="left:29px;top:942px;" width="6" height="19" viewBox="0 0 6 19"><rect x="0" y="0" width="2" height="2" fill="#cfd3d8"/><rect x="0" y="3" width="2" height="2" fill="#cfd3d8"/><rect x="0" y="6" width="2" height="2" fill="#cfd3d8"/><rect x="0" y="9" width="2" height="2" fill="#cfd3d8"/><rect x="0" y="12" width="2" height="2" fill="#cfd3d8"/><rect x="0" y="15" width="2" height="2" fill="#cfd3d8"/><rect x="3" y="0" width="2" height="2" fill="#cfd3d8"/><rect x="3" y="3" width="2" height="2" fill="#cfd3d8"/><rect x="3" y="6" width="2" height="2" fill="#cfd3d8"/><rect x="3" y="9" width="2" height="2" fill="#cfd3d8"/><rect x="3" y="12" width="2" height="2" fill="#cfd3d8"/><rect x="3" y="15" width="2" height="2" fill="#cfd3d8"/></svg>
<svg class="a" style="left:39px;top:946px;" width="11" height="11" viewBox="0 0 11 11"><path d="M1.5 1.5 L9.5 9.5 M9.5 1.5 L1.5 9.5" stroke="#dfe2e6" stroke-width="1.6"/></svg>
<svg class="a" style="left:59px;top:946px;" width="15" height="15" viewBox="0 0 15 15"><path d="M2 13.5 L8.5 7" stroke="#dfe2e6" stroke-width="2.2"/><path d="M8 4.5 C8 1.5 11 0.5 13.5 1.5 L11 4 L12 5.5 L14 3.5 C15 6 13 9 10 8" fill="#dfe2e6"/></svg>
<svg class="a" style="left:82px;top:946px;" width="17" height="14" viewBox="0 0 17 14"><rect x="0.5" y="0.5" width="15" height="12" fill="#e8eaed" stroke="#6e7581" stroke-width="1"/><rect x="0.5" y="0.5" width="15" height="3" fill="#6e7581"/><path d="M3 6 L5 8 L3 10" stroke="#555c66" fill="none" stroke-width="0.9"/><path d="M6 10 H10" stroke="#555c66" stroke-width="0.9"/></svg>
<div class="a" style="left:100.0px;top:950.8px;width:0;height:0;border-left:3.5px solid transparent;border-right:3.5px solid transparent;border-top:3.5px solid #5a616b"></div>
<span class="t" style="left:112.5px;top:946.63px;font-size:11.00px;line-height:11.00px;color:#8a9099;font-family:'Liberation Mono',monospace;letter-spacing:-0.080px;font-style:italic;">Befehl eingeben</span>
<svg class="a" style="left:8px;top:968px;" width="155" height="20" viewBox="0 0 155 20"><path d="M3 0.5 H67 C63 2 62 6 61 12 C60 17 58 18 54 18 H16 C12 18 10 17 9 12 C8 6 7 2 3 0.5 Z" fill="#3b4453"/><path d="M70 0.5 H126 C122 2 121 6 120 12 C119 17 117 18 113 18 H80 C76 18 74 17 73 12 C72 6 71 2 70 0.5 Z" fill="#2c333d"/><path d="M131 4 H152 C149 6 148 9 147 13 C146 17 144 18 141 18 H133 C129 18 128 16 129 13 C130 9 131 6 131 4 Z" fill="#2c333d"/></svg>
<span class="t" style="left:24.7px;top:971.73px;font-size:11.30px;line-height:11.30px;color:#eef0f3;font-family:'Liberation Sans',sans-serif;letter-spacing:-0.096px;font-weight:bold;">Modell</span>
<span class="t" style="left:81.7px;top:971.73px;font-size:11.30px;line-height:11.30px;color:#c9ced6;font-family:'Liberation Sans',sans-serif;letter-spacing:-0.318px;">Layout1</span>
<svg class="a" style="left:140px;top:971px;" width="12" height="12" viewBox="0 0 12 12"><path d="M6 1.5 V10.5 M1.5 6 H10.5" stroke="#c8ccd2" stroke-width="1.6"/></svg>
<div class="a" style="left:1182.4px;top:970.5px;width:49.59999999999991px;height:23px;background:#3b4453;"></div>
<div class="a" style="left:1235px;top:970.5px;width:60px;height:23px;background:#3b4453;"></div>
<div class="a" style="left:1298px;top:970.5px;width:158px;height:23px;background:#3b4453;"></div>
<div class="a" style="left:1459.8px;top:970.5px;width:98.20000000000005px;height:23px;background:#3b4453;"></div>
<div class="a" style="left:1561px;top:970.5px;width:37px;height:23px;background:#3b4453;"></div>
<div class="a" style="left:1600.6px;top:970.5px;width:21.40000000000009px;height:23px;background:#3b4453;"></div>
<div class="a" style="left:1625px;top:970.5px;width:23.40000000000009px;height:23px;background:#3b4453;"></div>
<div class="a" style="left:1651px;top:970.5px;width:96.59999999999991px;height:23px;background:#3b4453;"></div>
<div class="a" style="left:1750px;top:970.5px;width:46px;height:23px;background:#3b4453;"></div>
<div class="a" style="left:1397.7px;top:971.5px;width:20.3px;height:21px;background:#4f86c6;"></div>
<div class="a" style="left:1419.7px;top:971.5px;width:20.7px;height:21px;background:#4f86c6;"></div>
<div class="a" style="left:1459.8px;top:971.5px;width:20.6px;height:21px;background:#4f86c6;"></div>
<span class="t" style="left:1185.8px;top:977.89px;font-size:10.41px;line-height:10.41px;color:#e2e5e9;font-family:'Liberation Sans',sans-serif;">MODELL</span>
<svg class="a" style="left:1238px;top:975px;" width="16" height="15" viewBox="0 0 16 15"><path d="M4 1 V14 M8 1 V14 M12 1 V14 M1 4 H15 M1 8 H15 M1 12 H15" stroke="#dfe2e6" stroke-width="1.2"/></svg>
<svg class="a" style="left:1262px;top:975px;" width="14" height="15" viewBox="0 0 14 15"><rect x="1" y="1" width="2" height="2" fill="#dfe2e6"/><rect x="1" y="6" width="2" height="2" fill="#dfe2e6"/><rect x="1" y="11" width="2" height="2" fill="#dfe2e6"/><rect x="6" y="1" width="2" height="2" fill="#dfe2e6"/><rect x="6" y="6" width="2" height="2" fill="#dfe2e6"/><rect x="6" y="11" width="2" height="2" fill="#dfe2e6"/><rect x="11" y="1" width="2" height="2" fill="#dfe2e6"/><rect x="11" y="6" width="2" height="2" fill="#dfe2e6"/><rect x="11" y="11" width="2" height="2" fill="#dfe2e6"/></svg>
<div class="a" style="left:1284.5px;top:980.2px;width:0;height:0;border-left:3.5px solid transparent;border-right:3.5px solid transparent;border-top:3.5px solid #dfe2e6"></div>
<svg class="a" style="left:1301px;top:974px;" width="16" height="17" viewBox="0 0 16 17"><path d="M2 1 V15 H15 M2 10 H6 V15" stroke="#dfe2e6" stroke-width="1.3" fill="none"/></svg>
<svg class="a" style="left:1323px;top:974px;" width="17" height="17" viewBox="0 0 17 17"><circle cx="7" cy="10" r="5.5" stroke="#dfe2e6" stroke-width="1.3" fill="none"/><path d="M7 10 L15 3 M5 5 H13" stroke="#dfe2e6" stroke-width="1.3"/></svg>
<div class="a" style="left:1347.0px;top:980.2px;width:0;height:0;border-left:3.5px solid transparent;border-right:3.5px solid transparent;border-top:3.5px solid #dfe2e6"></div>
<svg class="a" style="left:1361px;top:974px;" width="15" height="17" viewBox="0 0 15 17"><path d="M7.5 1 V16" stroke="#3fae5a" stroke-width="1.5"/><path d="M1 2 L14 15" stroke="#d07a40" stroke-width="1.5"/><circle cx="7.5" cy="8.5" r="1.5" fill="#dfe2e6"/></svg>
<div class="a" style="left:1384.5px;top:980.2px;width:0;height:0;border-left:3.5px solid transparent;border-right:3.5px solid transparent;border-top:3.5px solid #dfe2e6"></div>
<svg class="a" style="left:1399px;top:974px;" width="18" height="17" viewBox="0 0 18 17"><path d="M2 15 L15 3" stroke="#fff" stroke-width="1.5"/><circle cx="9" cy="9" r="2" fill="#fff"/><path d="M3 15 H15" stroke="#fff" stroke-width="1" stroke-dasharray="1 1"/></svg>
<svg class="a" style="left:1421px;top:973px;" width="18" height="19" viewBox="0 0 18 19"><rect x="3" y="4" width="13" height="13" fill="none" stroke="#fff" stroke-width="1.3" stroke-dasharray="2 1"/><rect x="1" y="1" width="5" height="5" fill="#4f86c6" stroke="#fff" stroke-width="1"/></svg>
<div class="a" style="left:1445.5px;top:980.2px;width:0;height:0;border-left:3.5px solid transparent;border-right:3.5px solid transparent;border-top:3.5px solid #dfe2e6"></div>
<svg class="a" style="left:1461px;top:973px;" width="18" height="19" viewBox="0 0 18 19"><path d="M9 2 L5 10 L1 17 L9 12 L17 17 L13 10 Z" fill="#fff"/><circle cx="14" cy="4" r="2.5" fill="none" stroke="#fff" stroke-width="1.2"/></svg>
<svg class="a" style="left:1484px;top:973px;" width="18" height="19" viewBox="0 0 18 19"><path d="M9 4 L5 11 L2 17 L9 12 L16 17 L13 11 Z" fill="#dfe2e6"/><path d="M13 1 L16 5 L12 6" stroke="#dfe2e6" fill="none" stroke-width="1.2"/></svg>
<svg class="a" style="left:1506px;top:973px;" width="18" height="19" viewBox="0 0 18 19"><path d="M9 2 L6 10 L2 17 L9 13 L16 17 L12 10 Z" fill="#dfe2e6"/></svg>
<span class="t" style="left:1530.5px;top:977.16px;font-size:10.80px;line-height:10.80px;color:#e2e5e9;font-family:'Liberation Sans',sans-serif;letter-spacing:-0.7px">1:1</span>
<div class="a" style="left:1547.5px;top:980.2px;width:0;height:0;border-left:3.5px solid transparent;border-right:3.5px solid transparent;border-top:3.5px solid #dfe2e6"></div>
<svg class="a" style="left:1564px;top:974px;" width="17" height="17" viewBox="0 0 17 17"><g fill="#dfe2e6"><circle cx="8.5" cy="8.5" r="5"/><rect x="7" y="0.5" width="3" height="16"/><rect x="0.5" y="7" width="16" height="3"/><rect x="7" y="0.5" width="3" height="16" transform="rotate(45 8.5 8.5)"/><rect x="7" y="0.5" width="3" height="16" transform="rotate(-45 8.5 8.5)"/></g><circle cx="8.5" cy="8.5" r="2.2" fill="#3b4453"/></svg>
<div class="a" style="left:1588.5px;top:980.2px;width:0;height:0;border-left:3.5px solid transparent;border-right:3.5px solid transparent;border-top:3.5px solid #dfe2e6"></div>
<svg class="a" style="left:1603px;top:974px;" width="17" height="17" viewBox="0 0 17 17"><path d="M8.5 1 V16 M1 8.5 H16" stroke="#dfe2e6" stroke-width="1.6"/></svg>
<svg class="a" style="left:1627px;top:973px;" width="20" height="19" viewBox="0 0 20 19"><rect x="1" y="1" width="7" height="7" fill="none" stroke="#dfe2e6" stroke-width="1.2"/><circle cx="15" cy="6" r="3" fill="none" stroke="#dfe2e6" stroke-width="1.2"/><path d="M4 17 L8 11 L12 17 Z" fill="none" stroke="#dfe2e6" stroke-width="1.2"/></svg>
<svg class="a" style="left:1653px;top:973px;" width="20" height="19" viewBox="0 0 20 19"><rect x="1" y="3" width="9" height="8" fill="#5b9ae0"/><rect x="3" y="1" width="6" height="4" fill="#e8a13a"/><path d="M8 13 L11 17 L18 8" stroke="#3fae5a" stroke-width="2.2" fill="none"/><rect x="1" y="12" width="6" height="5" fill="#e8a13a"/></svg>
<svg class="a" style="left:1674px;top:973px;" width="20" height="19" viewBox="0 0 20 19"><rect x="1" y="2" width="16" height="13" fill="none" stroke="#dfe2e6" stroke-width="1.2"/><path d="M2 13 L7 6 L11 11 L15 5" stroke="#dfe2e6" fill="none"/><path d="M12 18 L15 12 L18 18 Z" fill="#f0b030"/></svg>
<svg class="a" style="left:1698px;top:973px;" width="20" height="19" viewBox="0 0 20 19"><path d="M2 6 H8 L11 9 H17 V17 H2 Z" fill="none" stroke="#d09a70" stroke-width="1.5"/><rect x="2" y="1" width="4" height="6" fill="none" stroke="#d09a70" stroke-width="1.3"/></svg>
<svg class="a" style="left:1725px;top:973px;" width="20" height="19" viewBox="0 0 20 19"><path d="M4 6 L10 2 L16 5 L10 9 Z" fill="none" stroke="#dfe2e6" stroke-width="1.2"/><path d="M4 9 L10 12 M4 12 L10 15" stroke="#dfe2e6" stroke-width="1"/><path d="M10 18 L14 10 L18 18 Z" fill="#f0b030"/></svg>
<svg class="a" style="left:1753px;top:974px;" width="17" height="16" viewBox="0 0 17 16"><rect x="1" y="2" width="14" height="12" fill="none" stroke="#dfe2e6" stroke-width="1.2"/><path d="M4 11 L7 8 M11 5 L9 7 M9 5 H11 V7" stroke="#dfe2e6" stroke-width="1.1" fill="none"/></svg>
<svg class="a" style="left:1776px;top:975px;" width="17" height="14" viewBox="0 0 17 14"><path d="M1 2 H16 M1 7 H16 M1 12 H16" stroke="#dfe2e6" stroke-width="1.8"/></svg>
</body></html>
